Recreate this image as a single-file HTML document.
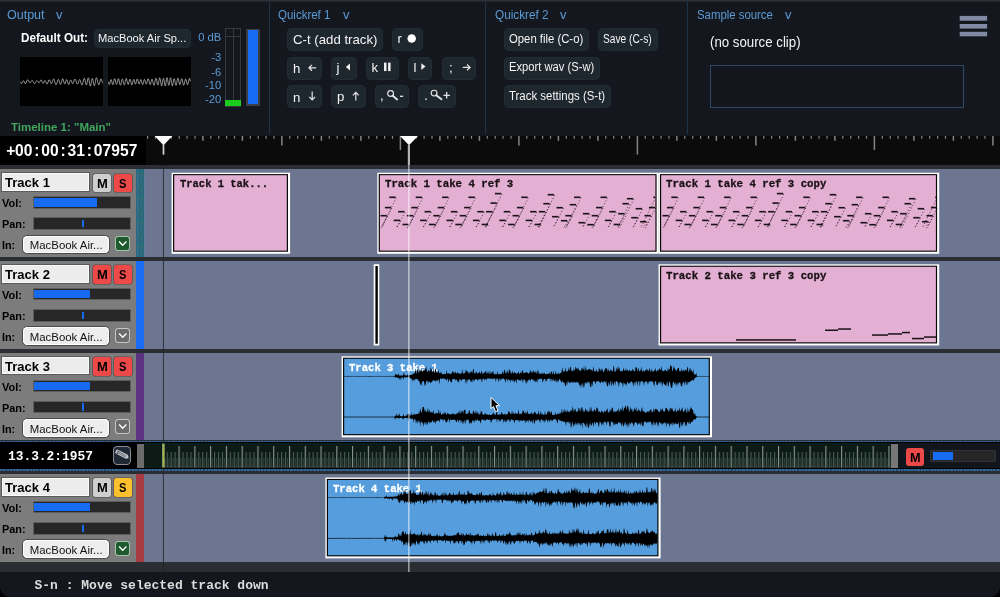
<!DOCTYPE html><html><head><meta charset="utf-8"><title>DAW</title><style>
*{box-sizing:border-box;margin:0;padding:0}
html,body{width:1000px;height:597px;overflow:hidden;background:#000}
body{position:relative;font-family:"Liberation Sans",sans-serif}
div,span,svg{position:absolute}
.t{white-space:pre;display:block}
.btn{background:#1e262e;border-radius:5px;box-shadow:inset 0 0 0 1px #232c35}
.vdiv{width:1px;background:#1d3349;top:2px;height:132px}
.blk{background:#000}
.hdr{background:#7c7c7c}
.name{background:#ececec;box-shadow:inset 0 0 0 1px #fafafa,0 0 0 1px #5a5a5a}
.ms{border-radius:2.5px;box-shadow:0 0 0 .6px rgba(50,30,30,.55)}
.sl{background:#272727;box-shadow:0 0 0 .8px #565656}
.fill{background:#166bf2}
.inb{background:#ededed;border-radius:4.5px;box-shadow:0 0 0 1px #4a4a4a, inset 0 0 0 1px #fff}
.cb{border-radius:2.5px}
.band{background:#2a2e32;left:0;width:1000px}
.lane{background:#6c7690}
.clip{box-shadow:0 0 0 1.1px #0a0a0a,0 0 0 2.6px #fff}
.pink{background:#e3afd3}
.sky{background:#559ddd}
.cl{-webkit-text-stroke:.3px currentColor}
</style></head><body><div id="app" style="left:0;top:0;width:1000px;height:597px;will-change:transform;background:#14181e;border-radius:0 0 11px 11px;overflow:hidden"><div style="left:0;top:0;width:1000px;height:2px;background:linear-gradient(#33363a,#1b1f24)"></div><div class="vdiv" style="left:269px"></div><div class="vdiv" style="left:485px"></div><div class="vdiv" style="left:687px"></div><span class="t" style="left:7px;top:8.52px;font:400 12.5px/1 'Liberation Sans',sans-serif;color:#5b9bd6;">Output</span><span class="t" style="left:56px;top:8.52px;font:400 12.5px/1 'Liberation Sans',sans-serif;color:#5b9bd6;transform:scaleX(1.04);transform-origin:left 50%;">v</span><span class="t" style="left:20.5px;top:31.87px;font:700 12.2px/1 'Liberation Sans',sans-serif;color:#fff;transform:scaleX(0.96);transform-origin:left 50%;">Default Out:</span><div class="btn" style="left:94px;top:29px;width:96.5px;height:18.5px;"></div><span class="t" style="left:98.3px;top:32.3px;font:400 11.7px/1 'Liberation Sans',sans-serif;color:#f2f2f2;transform:scaleX(0.95);transform-origin:left 50%;">MacBook Air Sp...</span><div class="blk" style="left:20.4px;top:56.6px;width:82.2px;height:49.6px;"></div><div class="blk" style="left:108.4px;top:56.6px;width:82.2px;height:49.6px;"></div><svg width="1000" height="597" viewBox="0 0 1000 597" style="left:0;top:0"><path d="M20.4 81.8L20.8 82.79L21.2 83.45L21.6 83.55L22 83.05L22.4 82.19L22.8 81.31L23.2 80.76L23.6 80.77L24 81.32L24.4 82.2L24.8 83.07L25.2 83.58L25.6 83.55L26 82.96L26.4 82L26.8 80.95L27.2 80.13L27.6 79.77L28 79.95L28.4 80.58L28.8 81.44L29.2 82.27L29.6 82.83L30 82.98L30.4 82.7L30.8 82.09L31.2 81.36L31.6 80.73L32 80.39L32.4 80.45L32.8 80.92L33.2 81.68L33.6 82.54L34 83.28L34.4 83.7L34.8 83.7L35.2 83.27L35.6 82.53L36 81.69L36.4 80.98L36.8 80.6L37.2 80.65L37.6 81.09L38 81.76L38.4 82.41L38.8 82.79L39.2 82.74L39.6 82.23L40 81.42L40.4 80.57L40.8 80.01L41.2 79.94L41.6 80.44L42 81.34L42.4 82.34L42.8 83.08L43.2 83.29L43.6 82.9L44 82.09L44.4 81.2L44.8 80.61L45.2 80.6L45.6 81.22L46 82.25L46.4 83.32L46.8 84.01L47.2 84.05L47.6 83.38L48 82.22L48.4 80.94L48.8 79.97L49.2 79.62L49.6 79.99L50 80.93L50.4 82.12L50.8 83.14L51.2 83.66L51.6 83.49L52 82.68L52.4 81.45L52.8 80.18L53.2 79.24L53.6 78.93L54 79.36L54.4 80.44L54.8 81.91L55.2 83.37L55.6 84.46L56 84.88L56.4 84.53L56.8 83.49L57.2 82.08L57.6 80.68L58 79.71L58.4 79.45L58.8 80L59.2 81.18L59.6 82.64L60 83.89L60.4 84.52L60.8 84.28L61.2 83.19L61.6 81.58L62 79.97L62.4 78.88L62.8 78.69L63.2 79.46L63.6 80.91L64 82.51L64.4 83.68L64.8 83.99L65.2 83.35L65.6 82.06L66 80.65L66.4 79.71L66.8 79.64L67.2 80.47L67.6 81.9L68 83.38L68.4 84.36L68.8 84.5L69.2 83.77L69.6 82.48L70 81.12L70.4 80.16L70.8 79.94L71.2 80.46L71.6 81.49L72 82.64L72.4 83.47L72.8 83.69L73.2 83.21L73.6 82.19L74 80.93L74.4 79.81L74.8 79.17L75.2 79.18L75.6 79.86L76 81.01L76.4 82.32L76.8 83.45L77.2 84.09L77.6 84.08L78 83.43L78.4 82.33L78.8 81.09L79.2 80.07L79.6 79.57L80 79.8L80.4 80.71L80.8 82.11L81.2 83.6L81.6 84.74L82 85.16L82.4 84.66L82.8 83.32L83.2 81.46L83.6 79.64L84 78.41L84.4 78.21L84.8 79.13L85.2 80.91L85.6 82.94L86 84.49L86.4 84.96L86.8 84.12L87.2 82.23L87.6 79.99L88 78.27L88.4 77.8L88.8 78.83L89.2 81.02L89.6 83.58L90 85.52L90.4 86.1L90.8 85.11L91.2 82.96L91.6 80.52L92 78.76L92.4 78.35L92.8 79.42L93.2 81.51L93.6 83.79L94 85.39L94.4 85.72L94.8 84.67L95.2 82.63L95.6 80.32L96 78.49L96.4 77.7L96.8 78.14L97.2 79.59L97.6 81.55L98 83.39L98.4 84.58L98.8 84.81L99.2 84.07L99.6 82.65L100 80.99L100.4 79.59L100.8 78.84L101.2 78.95L101.6 79.88L102 81.38L102.4 83.05" stroke="#d0d0d0" stroke-width=".7" fill="none"/><path d="M108.4 81.8L108.8 83.52L109.2 84.48L109.6 84.24L110 82.91L110.4 81.15L110.8 79.82L111.2 79.59L111.6 80.59L112 82.34L112.4 84.01L112.8 84.78L113.2 84.24L113.6 82.6L114 80.57L114.4 79.04L114.8 78.68L115.2 79.63L115.6 81.43L116 83.28L116.4 84.34L116.8 84.15L117.2 82.79L117.6 80.87L118 79.24L118.4 78.6L118.8 79.27L119.2 80.99L119.6 83.07L120 84.7L120.4 85.23L120.8 84.48L121.2 82.77L121.6 80.8L122 79.38L122.4 79.06L122.8 79.95L123.2 81.67L123.6 83.51L124 84.7L124.4 84.74L124.8 83.58L125.2 81.66L125.6 79.72L126 78.53L126.4 78.54L126.8 79.73L127.2 81.62L127.6 83.43L128 84.43L128.4 84.23L128.8 82.94L129.2 81.14L129.6 79.62L130 79.08L130.4 79.77L130.8 81.43L131.2 83.34L131.6 84.69L132 84.89L132.4 83.87L132.8 82.07L133.2 80.32L133.6 79.38L134 79.65L134.4 80.97L134.8 82.68L135.2 83.93L135.6 84.11L136 83.09L136.4 81.34L136.8 79.68L137.2 78.89L137.6 79.32L138 80.78L138.4 82.57L138.8 83.85L139.2 84.04L139.6 83.09L140 81.51L140.4 80.09L140.8 79.55L141.2 80.17L141.6 81.69L142 83.41L142.4 84.54L142.8 84.55L143.2 83.44L143.6 81.71L144 80.14L144.4 79.4L144.8 79.81L145.2 81.14L145.6 82.77L146 83.94L146.4 84.11L146.8 83.15L147.2 81.47L147.6 79.75L148 78.74L148.4 78.86L148.8 80.1L149.2 81.95L149.6 83.7L150 84.63L150.4 84.39L150.8 83.09L151.2 81.27L151.6 79.7L152 79.04L152.4 79.6L152.8 81.19L153.2 83.21L153.6 84.84L154 85.41L154.4 84.65L154.8 82.8L155.2 80.56L155.6 78.8L156 78.22L156.4 79.06L156.8 80.97L157.2 83.18L157.6 84.73L158 84.96L158.4 83.71L158.8 81.48L159.2 79.21L159.6 77.88L160 78.14L160.4 79.93L160.8 82.54L161.2 84.87L161.6 85.89L162 85.16L162.4 83L162.8 80.4L163.2 78.57L163.6 78.38L164 79.94L164.4 82.54L164.8 84.94L165.2 85.97L165.6 85.11L166 82.7L166.4 79.86L166.8 77.91L167.2 77.75L167.6 79.44L168 82.11L168.4 84.46L168.8 85.35L169.2 84.36L169.6 81.98L170 79.41L170.4 77.88L170.8 78.17L171.2 80.12L171.6 82.84L172 85.07L172.4 85.82L172.8 84.79L173.2 82.54L173.6 80.13L174 78.68L174.4 78.83L174.8 80.44L175.2 82.76L175.6 84.71L176 85.43L176.4 84.6L176.8 82.59L177.2 80.25L177.6 78.55L178 78.15L178.4 79.17L178.8 81.12L179.2 83.18L179.6 84.5L180 84.57L180.4 83.4L180.8 81.51L181.2 79.69L181.6 78.7L182 78.95L182.4 80.36L182.8 82.38L183.2 84.23L183.6 85.22L184 84.97L184.4 83.59L184.8 81.63L185.2 79.88L185.6 79.02L186 79.37L186.4 80.79L186.8 82.67L187.2 84.22L187.6 84.76L188 84.02L188.4 82.25L188.8 80.16L189.2 78.6L189.6 78.25L190 79.28L190.4 81.29" stroke="#d0d0d0" stroke-width=".7" fill="none"/></svg><span class="t" style="left:198.16px;top:31.72px;font:400 11.2px/1 'Liberation Sans',sans-serif;color:#5b9bd6;">0 dB</span><span class="t" style="left:211.24px;top:51.92px;font:400 11.2px/1 'Liberation Sans',sans-serif;color:#5b9bd6;">-3</span><span class="t" style="left:211.24px;top:66.52px;font:400 11.2px/1 'Liberation Sans',sans-serif;color:#5b9bd6;">-6</span><span class="t" style="left:205.01px;top:79.52px;font:400 11.2px/1 'Liberation Sans',sans-serif;color:#5b9bd6;">-10</span><span class="t" style="left:205.01px;top:94.12px;font:400 11.2px/1 'Liberation Sans',sans-serif;color:#5b9bd6;">-20</span><div class="" style="left:225px;top:28px;width:16px;height:78.6px;background:#14181e;box-shadow:inset 0 0 0 1px #36393e"></div><div class="" style="left:232.5px;top:28px;width:1px;height:78.6px;background:#36393e"></div><div class="" style="left:225px;top:36.4px;width:16px;height:1px;background:#36393e"></div><div class="" style="left:225.4px;top:99.8px;width:15.2px;height:6.5px;background:#1ccc1c"></div><div class="" style="left:246.4px;top:28.8px;width:13.5px;height:77.6px;background:#3b3e43"></div><div class="" style="left:248.1px;top:30.3px;width:10.3px;height:74px;background:#176bf5"></div><span class="t" style="left:278.3px;top:8.52px;font:400 12.5px/1 'Liberation Sans',sans-serif;color:#5b9bd6;transform:scaleX(0.92);transform-origin:left 50%;">Quickref 1</span><span class="t" style="left:343px;top:8.52px;font:400 12.5px/1 'Liberation Sans',sans-serif;color:#5b9bd6;transform:scaleX(1.04);transform-origin:left 50%;">v</span><div class="btn" style="left:287px;top:28.3px;width:95.6px;height:23.1px;"></div><span class="t" style="left:293.1px;top:32.73px;font:400 13.2px/1 'Liberation Sans',sans-serif;color:#f4f4f4;">C-t (add track)</span><div class="btn" style="left:391.7px;top:28.3px;width:31px;height:23.1px;"></div><span class="t" style="left:397.5px;top:32.23px;font:400 13.2px/1 'Liberation Sans',sans-serif;color:#f4f4f4;">r</span><div class="btn" style="left:287px;top:57px;width:35px;height:22.6px;"></div><span class="t" style="left:293px;top:62.43px;font:400 13.2px/1 'Liberation Sans',sans-serif;color:#f4f4f4;">h</span><div class="btn" style="left:331px;top:57px;width:25.7px;height:22.6px;"></div><span class="t" style="left:336.6px;top:61.03px;font:400 13.2px/1 'Liberation Sans',sans-serif;color:#f4f4f4;">j</span><div class="btn" style="left:366px;top:57px;width:32.5px;height:22.6px;"></div><span class="t" style="left:371.5px;top:60.83px;font:400 13.2px/1 'Liberation Sans',sans-serif;color:#f4f4f4;">k</span><div class="btn" style="left:407.7px;top:57px;width:24.7px;height:22.6px;"></div><span class="t" style="left:413.5px;top:60.83px;font:400 13.2px/1 'Liberation Sans',sans-serif;color:#f4f4f4;">l</span><div class="btn" style="left:441.6px;top:57px;width:34.4px;height:22.6px;"></div><span class="t" style="left:449px;top:61.13px;font:400 13.2px/1 'Liberation Sans',sans-serif;color:#f4f4f4;">;</span><div class="btn" style="left:287px;top:85.4px;width:35px;height:22.6px;"></div><span class="t" style="left:293px;top:90.63px;font:400 13.2px/1 'Liberation Sans',sans-serif;color:#f4f4f4;">n</span><div class="btn" style="left:331px;top:85.4px;width:34.5px;height:22.6px;"></div><span class="t" style="left:337px;top:90.23px;font:400 13.2px/1 'Liberation Sans',sans-serif;color:#f4f4f4;">p</span><div class="btn" style="left:374.7px;top:85.4px;width:34.3px;height:22.6px;"></div><span class="t" style="left:380px;top:89.43px;font:400 13.2px/1 'Liberation Sans',sans-serif;color:#f4f4f4;">,</span><div class="btn" style="left:418.3px;top:85.4px;width:37.7px;height:22.6px;"></div><span class="t" style="left:424.2px;top:89.43px;font:400 13.2px/1 'Liberation Sans',sans-serif;color:#f4f4f4;">.</span><svg width="1000" height="597" viewBox="0 0 1000 597" style="left:0;top:0" fill="none" stroke="#e4e4e4" stroke-width="1.2"><path d="M316.2 67.8H308.9M312 64.9L308.9 67.8L312 70.7"/><path d="M462.8 67.4H470.1M467 64.5L470.1 67.4L467 70.3"/><path d="M312.2 91.6V99.9M309.3 96.8L312.2 99.9L315.1 96.8"/><path d="M355.8 100.5V92.3M352.9 95.4L355.8 92.3L358.7 95.4"/><path d="M350 63.4V70.6L345.8 67Z" fill="#f0f0f0" stroke="none"/><path d="M421.3 63.2V70L425.5 66.6Z" fill="#f0f0f0" stroke="none"/><rect x="384" y="62.6" width="2.5" height="8.5" fill="#f0f0f0" stroke="none"/><rect x="388.1" y="62.6" width="2.5" height="8.5" fill="#f0f0f0" stroke="none"/><circle cx="390.6" cy="93.5" r="2.9" stroke-width="1.15"/><path d="M392.7 95.7L397.2 99.5" stroke-width="1.9" stroke-linecap="round"/><circle cx="434.1" cy="93.1" r="2.9" stroke-width="1.15"/><path d="M436.2 95.3L441.5 99.3" stroke-width="1.9" stroke-linecap="round"/><path d="M400 96.3H403.2" stroke-width="1.3"/><circle cx="411.7" cy="38.5" r="4.25" fill="#fff" stroke="none"/><path d="M443.4 95.3H449.9M446.65 92V98.6" stroke-width="1.35"/></svg><span class="t" style="left:494.5px;top:8.52px;font:400 12.5px/1 'Liberation Sans',sans-serif;color:#5b9bd6;transform:scaleX(0.94);transform-origin:left 50%;">Quickref 2</span><span class="t" style="left:559.6px;top:8.52px;font:400 12.5px/1 'Liberation Sans',sans-serif;color:#5b9bd6;transform:scaleX(1.04);transform-origin:left 50%;">v</span><div class="btn" style="left:503.8px;top:28.3px;width:84.9px;height:23.1px;"></div><span class="t" style="left:509px;top:32.89px;font:400 12.3px/1 'Liberation Sans',sans-serif;color:#f4f4f4;transform:scaleX(0.92);transform-origin:left 50%;">Open file (C-o)</span><div class="btn" style="left:598px;top:28.3px;width:59.8px;height:23.1px;"></div><span class="t" style="left:603.4px;top:32.89px;font:400 12.3px/1 'Liberation Sans',sans-serif;color:#f4f4f4;transform:scaleX(0.83);transform-origin:left 50%;">Save (C-s)</span><div class="btn" style="left:503.8px;top:57px;width:95.9px;height:22.6px;"></div><span class="t" style="left:509px;top:61.19px;font:400 12.3px/1 'Liberation Sans',sans-serif;color:#f4f4f4;transform:scaleX(0.91);transform-origin:left 50%;">Export wav (S-w)</span><div class="btn" style="left:503.8px;top:85.4px;width:106.9px;height:22.6px;"></div><span class="t" style="left:509px;top:89.69px;font:400 12.3px/1 'Liberation Sans',sans-serif;color:#f4f4f4;transform:scaleX(0.93);transform-origin:left 50%;">Track settings (S-t)</span><span class="t" style="left:696.6px;top:8.52px;font:400 12.5px/1 'Liberation Sans',sans-serif;color:#5b9bd6;transform:scaleX(0.91);transform-origin:left 50%;">Sample source</span><span class="t" style="left:785px;top:8.52px;font:400 12.5px/1 'Liberation Sans',sans-serif;color:#5b9bd6;transform:scaleX(1.04);transform-origin:left 50%;">v</span><span class="t" style="left:710px;top:35.62px;font:400 13.8px/1 'Liberation Sans',sans-serif;color:#f4f4f4;transform:scaleX(0.96);transform-origin:left 50%;">(no source clip)</span><div class="" style="left:710px;top:65px;width:254px;height:43px;border:1px solid #2a4a66;background:#13171d"></div><svg style="left:955px;top:12px" width="36" height="28" viewBox="955 12 36 28"><g fill="#808aa5"><rect x="959.7" y="15.9" width="27.4" height="4.8"/><rect x="959.7" y="24" width="27.4" height="4.6"/><rect x="959.7" y="31.8" width="27.4" height="4.5"/></g></svg><span class="t" style="left:11.3px;top:121.18px;font:700 11.6px/1 'Liberation Sans',sans-serif;color:#3fa65c;transform:scaleX(0.99);transform-origin:left 50%;">Timeline 1: &quot;Main&quot;</span><div class="" style="left:0px;top:136px;width:1000px;height:29px;background:#0b0b0b"></div><div class="blk" style="left:0px;top:136px;width:146px;height:29px;"></div><div style="left:6.25px;top:142.59px;height:16px;width:132px;font:700 15.6px/1 'Liberation Sans',sans-serif;color:#fff;white-space:nowrap"><span style="position:absolute;left:0px;width:8.75px;text-align:center">+</span><span style="position:absolute;left:8.75px;width:8.75px;text-align:center">0</span><span style="position:absolute;left:17.5px;width:8.75px;text-align:center">0</span><span style="position:absolute;left:26.25px;width:8.75px;text-align:center">:</span><span style="position:absolute;left:35px;width:8.75px;text-align:center">0</span><span style="position:absolute;left:43.75px;width:8.75px;text-align:center">0</span><span style="position:absolute;left:52.5px;width:8.75px;text-align:center">:</span><span style="position:absolute;left:61.25px;width:8.75px;text-align:center">3</span><span style="position:absolute;left:70px;width:8.75px;text-align:center">1</span><span style="position:absolute;left:78.75px;width:8.75px;text-align:center">:</span><span style="position:absolute;left:87.5px;width:8.75px;text-align:center">0</span><span style="position:absolute;left:96.25px;width:8.75px;text-align:center">7</span><span style="position:absolute;left:105px;width:8.75px;text-align:center">9</span><span style="position:absolute;left:113.75px;width:8.75px;text-align:center">5</span><span style="position:absolute;left:122.5px;width:8.75px;text-align:center">7</span></div><div class="band" style="left:0px;top:165px;width:1000px;height:407px;"></div><div class="hdr" style="left:0px;top:169.3px;width:136.5px;height:87.5px;"></div><div class="" style="left:136.3px;top:169.3px;width:7.7px;height:87.5px;background:#2a6880"></div><div class="lane" style="left:144px;top:169.3px;width:856px;height:87.5px;"></div><div class="name" style="left:1.8px;top:173.1px;width:86.8px;height:17.9px;"></div><span class="t" style="left:5px;top:177.38px;font:700 12.9px/1 'Liberation Sans',sans-serif;color:#000;transform:scaleX(1.01);transform-origin:left 50%;">Track 1</span><div class="ms" style="left:93.3px;top:173.7px;width:17.6px;height:18.6px;background:#cfcfcf"></div><span class="t" style="left:96.8px;top:177.53px;font:700 12.6px/1 'Liberation Sans',sans-serif;color:#000;transform:scaleX(1.03);transform-origin:left 50%;">M</span><div class="ms" style="left:113.6px;top:173.7px;width:18.2px;height:18.6px;background:#ee4949"></div><span class="t" style="left:119.2px;top:177.53px;font:700 12.6px/1 'Liberation Sans',sans-serif;color:#000;transform:scaleX(0.88);transform-origin:left 50%;">S</span><span class="t" style="left:2.3px;top:198.01px;font:700 10.5px/1 'Liberation Sans',sans-serif;color:#000;transform:scaleX(1.05);transform-origin:left 50%;">Vol:</span><div class="sl" style="left:33.6px;top:197.2px;width:96.2px;height:10.6px;"></div><div class="fill" style="left:34.4px;top:198.2px;width:62.3px;height:8.6px;"></div><span class="t" style="left:2.3px;top:219.31px;font:700 10.5px/1 'Liberation Sans',sans-serif;color:#000;transform:scaleX(1.04);transform-origin:left 50%;">Pan:</span><div class="sl" style="left:33.6px;top:218.3px;width:96.2px;height:10.6px;"></div><div class="fill" style="left:82px;top:219.9px;width:1.8px;height:7.4px;"></div><span class="t" style="left:2px;top:240.01px;font:700 10.5px/1 'Liberation Sans',sans-serif;color:#000;transform:scaleX(1.03);transform-origin:left 50%;">In:</span><div class="inb" style="left:22.6px;top:235.5px;width:86px;height:17.8px;"></div><span class="t" style="left:29.8px;top:240.15px;font:400 11.4px/1 'Liberation Sans',sans-serif;color:#111;">MacBook Air...</span><div class="cb" style="left:115.5px;top:236.8px;width:13.6px;height:13.1px;background:#1f5a2f;box-shadow:0 0 0 1px #a3c4aa"></div><svg style="left:114.8px;top:236.9px" width="15" height="14" viewBox="0 0 15 14"><path d="M4.1 4.5 7.7 8.3 11.4 4.5" fill="none" stroke="#fff" stroke-width="1.35"/></svg><svg style="left:136.6px;top:169.3px" width="8" height="87"><defs><pattern id="dots" width="8" height="12" patternUnits="userSpaceOnUse"><rect x="1" y="3" width="1" height="1" fill="#2c9a3c"/><rect x="4.5" y="2" width="1" height="1" fill="#2c9a3c"/><rect x="3.5" y="8" width="1" height="1" fill="#2c9a3c"/><rect x="5" y="5" width=".8" height=".8" fill="#a8863c"/><rect x="2.5" y="5.5" width=".8" height=".8" fill="#a8863c"/><rect x="4" y="10.5" width=".8" height=".8" fill="#a8863c"/><rect x="0" y="0" width=".7" height="12" fill="#4f8fc0" opacity=".5"/><rect x="7.3" y="0" width=".7" height="12" fill="#4f8fc0" opacity=".5"/></pattern></defs><rect width="8" height="87" fill="url(#dots)" opacity=".75"/></svg><div class="hdr" style="left:0px;top:261px;width:136.5px;height:87.5px;"></div><div class="" style="left:136.3px;top:261px;width:7.7px;height:87.5px;background:#1a6cf2"></div><div class="lane" style="left:144px;top:261px;width:856px;height:87.5px;"></div><div class="name" style="left:1.8px;top:264.8px;width:86.8px;height:17.9px;"></div><span class="t" style="left:5px;top:269.08px;font:700 12.9px/1 'Liberation Sans',sans-serif;color:#000;transform:scaleX(1.01);transform-origin:left 50%;">Track 2</span><div class="ms" style="left:93.3px;top:265.4px;width:17.6px;height:18.6px;background:#ee4949"></div><span class="t" style="left:96.8px;top:269.23px;font:700 12.6px/1 'Liberation Sans',sans-serif;color:#000;transform:scaleX(1.03);transform-origin:left 50%;">M</span><div class="ms" style="left:113.6px;top:265.4px;width:18.2px;height:18.6px;background:#ee4949"></div><span class="t" style="left:119.2px;top:269.23px;font:700 12.6px/1 'Liberation Sans',sans-serif;color:#000;transform:scaleX(0.88);transform-origin:left 50%;">S</span><span class="t" style="left:2.3px;top:289.71px;font:700 10.5px/1 'Liberation Sans',sans-serif;color:#000;transform:scaleX(1.05);transform-origin:left 50%;">Vol:</span><div class="sl" style="left:33.6px;top:288.9px;width:96.2px;height:10.6px;"></div><div class="fill" style="left:34.4px;top:289.9px;width:55.6px;height:8.6px;"></div><span class="t" style="left:2.3px;top:311.01px;font:700 10.5px/1 'Liberation Sans',sans-serif;color:#000;transform:scaleX(1.04);transform-origin:left 50%;">Pan:</span><div class="sl" style="left:33.6px;top:310px;width:96.2px;height:10.6px;"></div><div class="fill" style="left:82px;top:311.6px;width:1.8px;height:7.4px;"></div><span class="t" style="left:2px;top:331.71px;font:700 10.5px/1 'Liberation Sans',sans-serif;color:#000;transform:scaleX(1.03);transform-origin:left 50%;">In:</span><div class="inb" style="left:22.6px;top:327.2px;width:86px;height:17.8px;"></div><span class="t" style="left:29.8px;top:331.85px;font:400 11.4px/1 'Liberation Sans',sans-serif;color:#111;">MacBook Air...</span><div class="cb" style="left:115.5px;top:328.5px;width:13.6px;height:13.1px;background:#6c6c6c;box-shadow:0 0 0 1px #c6c6c6"></div><svg style="left:114.8px;top:328.6px" width="15" height="14" viewBox="0 0 15 14"><path d="M4.1 4.5 7.7 8.3 11.4 4.5" fill="none" stroke="#fff" stroke-width="1.35"/></svg><div class="hdr" style="left:0px;top:352.8px;width:136.5px;height:87.5px;"></div><div class="" style="left:136.3px;top:352.8px;width:7.7px;height:87.5px;background:#5c3380"></div><div class="lane" style="left:144px;top:352.8px;width:856px;height:87.5px;"></div><div class="name" style="left:1.8px;top:356.6px;width:86.8px;height:17.9px;"></div><span class="t" style="left:5px;top:360.88px;font:700 12.9px/1 'Liberation Sans',sans-serif;color:#000;transform:scaleX(1.01);transform-origin:left 50%;">Track 3</span><div class="ms" style="left:93.3px;top:357.2px;width:17.6px;height:18.6px;background:#ee4949"></div><span class="t" style="left:96.8px;top:361.03px;font:700 12.6px/1 'Liberation Sans',sans-serif;color:#000;transform:scaleX(1.03);transform-origin:left 50%;">M</span><div class="ms" style="left:113.6px;top:357.2px;width:18.2px;height:18.6px;background:#ee4949"></div><span class="t" style="left:119.2px;top:361.03px;font:700 12.6px/1 'Liberation Sans',sans-serif;color:#000;transform:scaleX(0.88);transform-origin:left 50%;">S</span><span class="t" style="left:2.3px;top:381.51px;font:700 10.5px/1 'Liberation Sans',sans-serif;color:#000;transform:scaleX(1.05);transform-origin:left 50%;">Vol:</span><div class="sl" style="left:33.6px;top:380.7px;width:96.2px;height:10.6px;"></div><div class="fill" style="left:34.4px;top:381.7px;width:55.6px;height:8.6px;"></div><span class="t" style="left:2.3px;top:402.81px;font:700 10.5px/1 'Liberation Sans',sans-serif;color:#000;transform:scaleX(1.04);transform-origin:left 50%;">Pan:</span><div class="sl" style="left:33.6px;top:401.8px;width:96.2px;height:10.6px;"></div><div class="fill" style="left:82px;top:403.4px;width:1.8px;height:7.4px;"></div><span class="t" style="left:2px;top:423.51px;font:700 10.5px/1 'Liberation Sans',sans-serif;color:#000;transform:scaleX(1.03);transform-origin:left 50%;">In:</span><div class="inb" style="left:22.6px;top:419px;width:86px;height:17.8px;"></div><span class="t" style="left:29.8px;top:423.65px;font:400 11.4px/1 'Liberation Sans',sans-serif;color:#111;">MacBook Air...</span><div class="cb" style="left:115.5px;top:420.3px;width:13.6px;height:13.1px;background:#6c6c6c;box-shadow:0 0 0 1px #c6c6c6"></div><svg style="left:114.8px;top:420.4px" width="15" height="14" viewBox="0 0 15 14"><path d="M4.1 4.5 7.7 8.3 11.4 4.5" fill="none" stroke="#fff" stroke-width="1.35"/></svg><div class="hdr" style="left:0px;top:474px;width:136.5px;height:87.5px;"></div><div class="" style="left:136.3px;top:474px;width:7.7px;height:87.5px;background:#a83a44"></div><div class="lane" style="left:144px;top:474px;width:856px;height:87.5px;"></div><div class="name" style="left:1.8px;top:477.8px;width:86.8px;height:17.9px;"></div><span class="t" style="left:5px;top:482.08px;font:700 12.9px/1 'Liberation Sans',sans-serif;color:#000;transform:scaleX(1.01);transform-origin:left 50%;">Track 4</span><div class="ms" style="left:93.3px;top:478.4px;width:17.6px;height:18.6px;background:#cfcfcf"></div><span class="t" style="left:96.8px;top:482.23px;font:700 12.6px/1 'Liberation Sans',sans-serif;color:#000;transform:scaleX(1.03);transform-origin:left 50%;">M</span><div class="ms" style="left:113.6px;top:478.4px;width:18.2px;height:18.6px;background:#fcc02e"></div><span class="t" style="left:119.2px;top:482.23px;font:700 12.6px/1 'Liberation Sans',sans-serif;color:#000;transform:scaleX(0.88);transform-origin:left 50%;">S</span><span class="t" style="left:2.3px;top:502.71px;font:700 10.5px/1 'Liberation Sans',sans-serif;color:#000;transform:scaleX(1.05);transform-origin:left 50%;">Vol:</span><div class="sl" style="left:33.6px;top:501.9px;width:96.2px;height:10.6px;"></div><div class="fill" style="left:34.4px;top:502.9px;width:55.6px;height:8.6px;"></div><span class="t" style="left:2.3px;top:524.01px;font:700 10.5px/1 'Liberation Sans',sans-serif;color:#000;transform:scaleX(1.04);transform-origin:left 50%;">Pan:</span><div class="sl" style="left:33.6px;top:523px;width:96.2px;height:10.6px;"></div><div class="fill" style="left:82px;top:524.6px;width:1.8px;height:7.4px;"></div><span class="t" style="left:2px;top:544.71px;font:700 10.5px/1 'Liberation Sans',sans-serif;color:#000;transform:scaleX(1.03);transform-origin:left 50%;">In:</span><div class="inb" style="left:22.6px;top:540.2px;width:86px;height:17.8px;"></div><span class="t" style="left:29.8px;top:544.85px;font:400 11.4px/1 'Liberation Sans',sans-serif;color:#111;">MacBook Air...</span><div class="cb" style="left:115.5px;top:541.5px;width:13.6px;height:13.1px;background:#1f5a2f;box-shadow:0 0 0 1px #a3c4aa"></div><svg style="left:114.8px;top:541.6px" width="15" height="14" viewBox="0 0 15 14"><path d="M4.1 4.5 7.7 8.3 11.4 4.5" fill="none" stroke="#fff" stroke-width="1.35"/></svg><div class="" style="left:0px;top:440.5px;width:1000px;height:30.2px;background:#000"></div><div class="" style="left:0px;top:440.6px;width:1000px;height:1.4px;background:repeating-linear-gradient(90deg,#34679a 0 2.2px,#25496e 2.2px 3.3px)"></div><div class="" style="left:0px;top:469.2px;width:1000px;height:1.4px;background:repeating-linear-gradient(90deg,#34679a 0 2.2px,#25496e 2.2px 3.3px)"></div><span class="t" style="left:8.2px;top:449.93px;font:700 13.4px/1 'Liberation Mono',monospace;color:#fff;transform:scaleX(0.96);transform-origin:left 50%;">13.3.2:1957</span><div class="" style="left:112.7px;top:446.1px;width:18.8px;height:18.8px;background:#1f2833;border-radius:4.5px;box-shadow:inset 0 0 0 1px #868c94"></div><svg style="left:112.7px;top:446.1px" width="19" height="19" viewBox="0 0 19 19"><g transform="translate(2.8 5) rotate(27.5) scale(1.12)"><path d="M1.2 -2H10.6L14.4 0.3L10.6 2H1.2Q0 2 0 .8V-.8Q0 -2 1.2 -2Z" fill="#c9cdd2"/><path d="M1 -0.7H10.4M1 .7H10.4M2.4 -2V2" stroke="#454b54" stroke-width=".6" fill="none"/><path d="M12.4 -0.9L14.4 .3L12.4 1.2Z" fill="#20242a"/></g></svg><div class="" style="left:137px;top:443.5px;width:7px;height:24px;background:#6b6b6b"></div><div class="" style="left:144px;top:443px;width:746.8px;height:24.8px;background:#0c1b16"></div><div class="" style="left:890.8px;top:443.5px;width:7.2px;height:24px;background:#777"></div><div class="" style="left:898px;top:443px;width:102px;height:25px;background:#12161c"></div><div class="" style="left:905.8px;top:448.3px;width:18.2px;height:17.8px;background:#ee4949;border-radius:3px"></div><span class="t" style="left:909.6px;top:451.63px;font:700 12.6px/1 'Liberation Sans',sans-serif;color:#000;transform:scaleX(1.01);transform-origin:left 50%;">M</span><div class="" style="left:931.4px;top:450.6px;width:63.6px;height:10.8px;background:#262626;box-shadow:0 0 0 .7px #3c3c3c"></div><div class="fill" style="left:932.8px;top:452px;width:20.7px;height:7.6px;"></div><svg width="1000" height="597" viewBox="0 0 1000 597" style="left:0;top:0"><defs><pattern id="clk" x="162.75" y="443" width="15.775" height="25" patternUnits="userSpaceOnUse"><rect x="0.2" y="3" width=".9" height="21.6" fill="#a6b6ae"/><rect x="4.14" y="9.2" width=".9" height="15.4" fill="#5b6f66"/><rect x="8.09" y="9.2" width=".9" height="15.4" fill="#5b6f66"/><rect x="12.03" y="9.2" width=".9" height="15.4" fill="#5b6f66"/><rect x="2.22" y="15" width=".8" height="9.6" fill="#384c43"/><rect x="6.17" y="15" width=".8" height="9.6" fill="#384c43"/><rect x="10.11" y="15" width=".8" height="9.6" fill="#384c43"/><rect x="14.05" y="15" width=".8" height="9.6" fill="#384c43"/><rect x="0" y="22.4" width="15.775" height="2.2" fill="#6a4a4a" opacity=".22"/></pattern></defs><g fill="#858585"><rect x="147" y="136" width="1.2" height="2.8"/><rect x="154.9" y="136" width="1.2" height="2.8"/><rect x="162.65" y="136" width="1.5" height="18.5"/><rect x="170.7" y="136" width="1.2" height="2.8"/><rect x="178.6" y="136" width="1.2" height="2.8"/><rect x="186.5" y="136" width="1.2" height="2.8"/><rect x="194.4" y="136" width="1.2" height="2.8"/><rect x="202.15" y="136" width="1.5" height="4.8"/><rect x="210.2" y="136" width="1.2" height="2.8"/><rect x="218.1" y="136" width="1.2" height="2.8"/><rect x="226" y="136" width="1.2" height="2.8"/><rect x="233.9" y="136" width="1.2" height="2.8"/><rect x="241.65" y="136" width="1.5" height="4.8"/><rect x="249.7" y="136" width="1.2" height="2.8"/><rect x="257.6" y="136" width="1.2" height="2.8"/><rect x="265.5" y="136" width="1.2" height="2.8"/><rect x="273.4" y="136" width="1.2" height="2.8"/><rect x="281.15" y="136" width="1.5" height="9.6"/><rect x="289.2" y="136" width="1.2" height="2.8"/><rect x="297.1" y="136" width="1.2" height="2.8"/><rect x="305" y="136" width="1.2" height="2.8"/><rect x="312.9" y="136" width="1.2" height="2.8"/><rect x="320.65" y="136" width="1.5" height="4.8"/><rect x="328.7" y="136" width="1.2" height="2.8"/><rect x="336.6" y="136" width="1.2" height="2.8"/><rect x="344.5" y="136" width="1.2" height="2.8"/><rect x="352.4" y="136" width="1.2" height="2.8"/><rect x="360.15" y="136" width="1.5" height="4.8"/><rect x="368.2" y="136" width="1.2" height="2.8"/><rect x="376.1" y="136" width="1.2" height="2.8"/><rect x="384" y="136" width="1.2" height="2.8"/><rect x="391.9" y="136" width="1.2" height="2.8"/><rect x="399.65" y="136" width="1.5" height="14"/><rect x="407.7" y="136" width="1.2" height="2.8"/><rect x="415.6" y="136" width="1.2" height="2.8"/><rect x="423.5" y="136" width="1.2" height="2.8"/><rect x="431.4" y="136" width="1.2" height="2.8"/><rect x="439.15" y="136" width="1.5" height="4.8"/><rect x="447.2" y="136" width="1.2" height="2.8"/><rect x="455.1" y="136" width="1.2" height="2.8"/><rect x="463" y="136" width="1.2" height="2.8"/><rect x="470.9" y="136" width="1.2" height="2.8"/><rect x="478.65" y="136" width="1.5" height="4.8"/><rect x="486.7" y="136" width="1.2" height="2.8"/><rect x="494.6" y="136" width="1.2" height="2.8"/><rect x="502.5" y="136" width="1.2" height="2.8"/><rect x="510.4" y="136" width="1.2" height="2.8"/><rect x="518.15" y="136" width="1.5" height="9.6"/><rect x="526.2" y="136" width="1.2" height="2.8"/><rect x="534.1" y="136" width="1.2" height="2.8"/><rect x="542" y="136" width="1.2" height="2.8"/><rect x="549.9" y="136" width="1.2" height="2.8"/><rect x="557.65" y="136" width="1.5" height="4.8"/><rect x="565.7" y="136" width="1.2" height="2.8"/><rect x="573.6" y="136" width="1.2" height="2.8"/><rect x="581.5" y="136" width="1.2" height="2.8"/><rect x="589.4" y="136" width="1.2" height="2.8"/><rect x="597.15" y="136" width="1.5" height="4.8"/><rect x="605.2" y="136" width="1.2" height="2.8"/><rect x="613.1" y="136" width="1.2" height="2.8"/><rect x="621" y="136" width="1.2" height="2.8"/><rect x="628.9" y="136" width="1.2" height="2.8"/><rect x="636.65" y="136" width="1.5" height="18.5"/><rect x="644.7" y="136" width="1.2" height="2.8"/><rect x="652.6" y="136" width="1.2" height="2.8"/><rect x="660.5" y="136" width="1.2" height="2.8"/><rect x="668.4" y="136" width="1.2" height="2.8"/><rect x="676.15" y="136" width="1.5" height="4.8"/><rect x="684.2" y="136" width="1.2" height="2.8"/><rect x="692.1" y="136" width="1.2" height="2.8"/><rect x="700" y="136" width="1.2" height="2.8"/><rect x="707.9" y="136" width="1.2" height="2.8"/><rect x="715.65" y="136" width="1.5" height="4.8"/><rect x="723.7" y="136" width="1.2" height="2.8"/><rect x="731.6" y="136" width="1.2" height="2.8"/><rect x="739.5" y="136" width="1.2" height="2.8"/><rect x="747.4" y="136" width="1.2" height="2.8"/><rect x="755.15" y="136" width="1.5" height="9.6"/><rect x="763.2" y="136" width="1.2" height="2.8"/><rect x="771.1" y="136" width="1.2" height="2.8"/><rect x="779" y="136" width="1.2" height="2.8"/><rect x="786.9" y="136" width="1.2" height="2.8"/><rect x="794.65" y="136" width="1.5" height="4.8"/><rect x="802.7" y="136" width="1.2" height="2.8"/><rect x="810.6" y="136" width="1.2" height="2.8"/><rect x="818.5" y="136" width="1.2" height="2.8"/><rect x="826.4" y="136" width="1.2" height="2.8"/><rect x="834.15" y="136" width="1.5" height="4.8"/><rect x="842.2" y="136" width="1.2" height="2.8"/><rect x="850.1" y="136" width="1.2" height="2.8"/><rect x="858" y="136" width="1.2" height="2.8"/><rect x="865.9" y="136" width="1.2" height="2.8"/><rect x="873.65" y="136" width="1.5" height="14"/><rect x="881.7" y="136" width="1.2" height="2.8"/><rect x="889.6" y="136" width="1.2" height="2.8"/><rect x="897.5" y="136" width="1.2" height="2.8"/><rect x="905.4" y="136" width="1.2" height="2.8"/><rect x="913.15" y="136" width="1.5" height="4.8"/><rect x="921.2" y="136" width="1.2" height="2.8"/><rect x="929.1" y="136" width="1.2" height="2.8"/><rect x="937" y="136" width="1.2" height="2.8"/><rect x="944.9" y="136" width="1.2" height="2.8"/><rect x="952.65" y="136" width="1.5" height="4.8"/><rect x="960.7" y="136" width="1.2" height="2.8"/><rect x="968.6" y="136" width="1.2" height="2.8"/><rect x="976.5" y="136" width="1.2" height="2.8"/><rect x="984.4" y="136" width="1.2" height="2.8"/><rect x="992.15" y="136" width="1.5" height="9.6"/></g><rect x="162.75" y="443" width="728" height="25" fill="url(#clk)"/><rect x="162.9" y="165" width="1" height="407" fill="#23262c" opacity=".85"/><rect x="162" y="443.6" width="2.7" height="23.8" fill="#6f9a6c"/><path d="M163.6 444.6V467" stroke="#f6c61c" stroke-width="1.4" stroke-dasharray=".9 .9"/></svg><svg width="1000" height="597" viewBox="0 0 1000 597" style="left:0;top:0"><rect x="171.6" y="172.7" width="118.5" height="81.1" fill="#fff"/><rect x="173" y="174.1" width="115" height="77.65" fill="#080808"/><rect x="174.2" y="175.2" width="112.6" height="75.4" fill="#e3afd3"/><rect x="377.3" y="172.7" width="281.4" height="81.1" fill="#fff"/><rect x="378.7" y="174.1" width="277.9" height="77.65" fill="#080808"/><rect x="379.9" y="175.2" width="275.5" height="75.4" fill="#e3afd3"/><rect x="658.55" y="172.7" width="280.65" height="81.1" fill="#fff"/><rect x="659.95" y="174.1" width="277.15" height="77.65" fill="#080808"/><rect x="661.15" y="175.2" width="274.75" height="75.4" fill="#e3afd3"/><rect x="658.55" y="264.3" width="280.65" height="81.2" fill="#fff"/><rect x="659.95" y="265.7" width="277.15" height="77.75" fill="#080808"/><rect x="661.15" y="266.8" width="274.75" height="75.5" fill="#e3afd3"/><rect x="373.7" y="264.2" width="5.6" height="81.3" fill="#fff"/><rect x="375.4" y="266" width="2.4" height="77.7" fill="#000"/><rect x="341.6" y="356.3" width="370.4" height="81" fill="#fff"/><rect x="343" y="357.7" width="366.9" height="77.55" fill="#080808"/><rect x="344.2" y="358.8" width="364.5" height="75.3" fill="#559ddd"/><rect x="325.4" y="477.5" width="335.2" height="80.9" fill="#fff"/><rect x="326.8" y="478.9" width="331.7" height="77.45" fill="#080808"/><rect x="328" y="480" width="329.3" height="75.2" fill="#559ddd"/></svg><span class="t cl" style="left:179.7px;top:178.72px;font:700 10.8px/1 'Liberation Mono',monospace;color:#1b1216;transform:scaleX(0.97);transform-origin:left 50%;">Track 1 tak...</span><span class="t cl" style="left:385.2px;top:178.72px;font:700 10.8px/1 'Liberation Mono',monospace;color:#1b1216;transform:scaleX(0.99);transform-origin:left 50%;">Track 1 take 4 ref 3</span><span class="t cl" style="left:665.7px;top:178.72px;font:700 10.8px/1 'Liberation Mono',monospace;color:#1b1216;transform:scaleX(0.99);transform-origin:left 50%;">Track 1 take 4 ref 3 copy</span><span class="t cl" style="left:665.7px;top:271.02px;font:700 10.8px/1 'Liberation Mono',monospace;color:#1b1216;transform:scaleX(0.99);transform-origin:left 50%;">Track 2 take 3 ref 3 copy</span><span class="t cl" style="left:349.4px;top:362.72px;font:700 10.8px/1 'Liberation Mono',monospace;color:#fff;transform:scaleX(0.98);transform-origin:left 50%;">Track 3 take 1</span><span class="t cl" style="left:333.2px;top:483.82px;font:700 10.8px/1 'Liberation Mono',monospace;color:#fff;transform:scaleX(0.98);transform-origin:left 50%;">Track 4 take 1</span><svg width="1000" height="597" viewBox="0 0 1000 597" style="left:0;top:0"><g fill="#1a1216"><path d="M387.4 216.2L381.09 227.6M391.8 208.1L381.82 227.6M396.2 197.8L381.56 227.6M400.6 220.9L396.42 227.6M405 212.2L396.88 227.6M409.4 225L407.08 227.6M413.8 216.2L407.49 227.6M418.2 208.1L408.22 227.6M422.6 197.8L407.96 227.6M427 220.9L422.82 227.6M431.4 212.2L423.28 227.6M435.8 225L433.48 227.6M440.2 216.2L433.89 227.6M444.6 208.1L434.62 227.6M449 197.8L434.36 227.6M453.4 220.9L449.22 227.6M457.8 212.2L449.68 227.6M462.2 225L459.88 227.6M466.6 216.2L460.29 227.6M471 208.1L461.02 227.6M475.4 197.8L460.76 227.6M479.8 220.9L475.62 227.6M484.2 212.2L476.08 227.6M488.6 225L486.28 227.6M493 212.2L484.88 227.6M497.4 203.6L485.38 227.6M501.8 194.1L485.48 227.6M506.2 220.9L502.02 227.6M510.6 212.2L502.48 227.6M515 225L512.68 227.6M519.4 216.2L513.09 227.6M523.8 208.1L513.82 227.6M528.2 197.8L513.56 227.6M532.6 220.9L528.42 227.6M537 212.2L528.88 227.6M541.4 225L539.08 227.6M545.8 212.2L537.68 227.6M550.2 204.2L538.46 227.6M554.6 195.2L538.78 227.6M559 217.2L553.15 227.6M563.4 208.2L553.47 227.6M567.8 221.2L563.76 227.6M572.2 216.2L565.89 227.6M576.6 205.2L565.31 227.6M581 197.8L566.36 227.6M585.4 223.2L582.26 227.6M589.8 214.2L582.59 227.6M594.2 225.2L591.97 227.6M598.6 216.2L592.29 227.6M603 208.1L593.02 227.6M607.4 197.8L592.76 227.6M611.8 220.9L607.62 227.6M616.2 212.2L608.08 227.6M620.6 225L618.28 227.6M625 214.2L617.79 227.6M629.4 204.2L617.66 227.6M633.8 199.2L619.79 227.6M638.2 218.2L632.8 227.6M642.6 209.2L633.12 227.6M647 222.2L643.41 227.6M651.4 216.2L645.09 227.6M655.6 208.1L645.62 227.6M655.6 197.8L640.96 227.6" stroke="#24141f" stroke-width="0.9" stroke-dasharray="1 2.1" fill="none" opacity=".9"/><rect x="380.5" y="214.9" width="6.3" height="1.6"/><rect x="384.9" y="206.8" width="6.3" height="1.6"/><rect x="389.3" y="196.5" width="6.3" height="1.6"/><rect x="393.7" y="219.6" width="6.3" height="1.6"/><rect x="398.1" y="210.9" width="6.3" height="1.6"/><rect x="402.5" y="223.7" width="6.3" height="1.6"/><rect x="406.9" y="214.9" width="6.3" height="1.6"/><rect x="411.3" y="206.8" width="6.3" height="1.6"/><rect x="415.7" y="196.5" width="6.3" height="1.6"/><rect x="420.1" y="219.6" width="6.3" height="1.6"/><rect x="424.5" y="210.9" width="6.3" height="1.6"/><rect x="428.9" y="223.7" width="6.3" height="1.6"/><rect x="433.3" y="214.9" width="6.3" height="1.6"/><rect x="437.7" y="206.8" width="6.3" height="1.6"/><rect x="442.1" y="196.5" width="6.3" height="1.6"/><rect x="446.5" y="219.6" width="6.3" height="1.6"/><rect x="450.9" y="210.9" width="6.3" height="1.6"/><rect x="455.3" y="223.7" width="6.3" height="1.6"/><rect x="459.7" y="214.9" width="6.3" height="1.6"/><rect x="464.1" y="206.8" width="6.3" height="1.6"/><rect x="468.5" y="196.5" width="6.3" height="1.6"/><rect x="472.9" y="219.6" width="6.3" height="1.6"/><rect x="477.3" y="210.9" width="6.3" height="1.6"/><rect x="481.7" y="223.7" width="6.3" height="1.6"/><rect x="486.1" y="210.9" width="6.3" height="1.6"/><rect x="490.5" y="202.3" width="6.3" height="1.6"/><rect x="494.9" y="192.8" width="6.3" height="1.6"/><rect x="499.3" y="219.6" width="6.3" height="1.6"/><rect x="503.7" y="210.9" width="6.3" height="1.6"/><rect x="508.1" y="223.7" width="6.3" height="1.6"/><rect x="512.5" y="214.9" width="6.3" height="1.6"/><rect x="516.9" y="206.8" width="6.3" height="1.6"/><rect x="521.3" y="196.5" width="6.3" height="1.6"/><rect x="525.7" y="219.6" width="6.3" height="1.6"/><rect x="530.1" y="210.9" width="6.3" height="1.6"/><rect x="534.5" y="223.7" width="6.3" height="1.6"/><rect x="538.9" y="210.9" width="6.3" height="1.6"/><rect x="543.3" y="202.9" width="6.3" height="1.6"/><rect x="547.7" y="193.9" width="6.3" height="1.6"/><rect x="552.1" y="215.9" width="6.3" height="1.6"/><rect x="556.5" y="206.9" width="6.3" height="1.6"/><rect x="560.9" y="219.9" width="6.3" height="1.6"/><rect x="565.3" y="214.9" width="6.3" height="1.6"/><rect x="569.7" y="203.9" width="6.3" height="1.6"/><rect x="574.1" y="196.5" width="6.3" height="1.6"/><rect x="578.5" y="221.9" width="6.3" height="1.6"/><rect x="582.9" y="212.9" width="6.3" height="1.6"/><rect x="587.3" y="223.9" width="6.3" height="1.6"/><rect x="591.7" y="214.9" width="6.3" height="1.6"/><rect x="596.1" y="206.8" width="6.3" height="1.6"/><rect x="600.5" y="196.5" width="6.3" height="1.6"/><rect x="604.9" y="219.6" width="6.3" height="1.6"/><rect x="609.3" y="210.9" width="6.3" height="1.6"/><rect x="613.7" y="223.7" width="6.3" height="1.6"/><rect x="618.1" y="212.9" width="6.3" height="1.6"/><rect x="622.5" y="202.9" width="6.3" height="1.6"/><rect x="626.9" y="197.9" width="6.3" height="1.6"/><rect x="631.3" y="216.9" width="6.3" height="1.6"/><rect x="635.7" y="207.9" width="6.3" height="1.6"/><rect x="640.1" y="220.9" width="6.3" height="1.6"/><rect x="644.5" y="214.9" width="6.3" height="1.6"/><rect x="648.9" y="206.8" width="6.1" height="1.6"/><rect x="653.3" y="196.5" width="1.7" height="1.6"/></g><g fill="#1a1216"><path d="M669.4 216.2L663.09 227.6M673.8 208.1L663.82 227.6M678.2 197.8L663.56 227.6M682.6 220.9L678.42 227.6M687 212.2L678.88 227.6M691.4 225L689.08 227.6M695.8 216.2L689.49 227.6M700.2 208.1L690.22 227.6M704.6 197.8L689.96 227.6M709 220.9L704.82 227.6M713.4 212.2L705.28 227.6M717.8 225L715.48 227.6M722.2 216.2L715.89 227.6M726.6 208.1L716.62 227.6M731 197.8L716.36 227.6M735.4 220.9L731.22 227.6M739.8 212.2L731.68 227.6M744.2 225L741.88 227.6M748.6 216.2L742.29 227.6M753 208.1L743.02 227.6M757.4 197.8L742.76 227.6M761.8 220.9L757.62 227.6M766.2 212.2L758.08 227.6M770.6 225L768.28 227.6M775 212.2L766.88 227.6M779.4 203.6L767.38 227.6M783.8 194.1L767.48 227.6M788.2 220.9L784.02 227.6M792.6 212.2L784.48 227.6M797 225L794.68 227.6M801.4 216.2L795.09 227.6M805.8 208.1L795.82 227.6M810.2 197.8L795.56 227.6M814.6 220.9L810.42 227.6M819 212.2L810.88 227.6M823.4 225L821.08 227.6M827.8 212.2L819.68 227.6M832.2 204.2L820.46 227.6M836.6 195.2L820.78 227.6M841 217.2L835.15 227.6M845.4 208.2L835.47 227.6M849.8 221.2L845.76 227.6M854.2 216.2L847.89 227.6M858.6 205.2L847.31 227.6M863 197.8L848.36 227.6M867.4 223.2L864.26 227.6M871.8 214.2L864.59 227.6M876.2 225.2L873.97 227.6M880.6 216.2L874.29 227.6M885 208.1L875.02 227.6M889.4 197.8L874.76 227.6M893.8 220.9L889.62 227.6M898.2 212.2L890.08 227.6M902.6 225L900.28 227.6M907 214.2L899.79 227.6M911.4 204.2L899.66 227.6M915.8 199.2L901.79 227.6M920.2 218.2L914.8 227.6M924.6 209.2L915.12 227.6M929 222.2L925.41 227.6M933.4 216.2L927.09 227.6M937.1 208.1L927.12 227.6M937.1 197.8L922.46 227.6" stroke="#24141f" stroke-width="0.9" stroke-dasharray="1 2.1" fill="none" opacity=".9"/><rect x="662.5" y="214.9" width="6.3" height="1.6"/><rect x="666.9" y="206.8" width="6.3" height="1.6"/><rect x="671.3" y="196.5" width="6.3" height="1.6"/><rect x="675.7" y="219.6" width="6.3" height="1.6"/><rect x="680.1" y="210.9" width="6.3" height="1.6"/><rect x="684.5" y="223.7" width="6.3" height="1.6"/><rect x="688.9" y="214.9" width="6.3" height="1.6"/><rect x="693.3" y="206.8" width="6.3" height="1.6"/><rect x="697.7" y="196.5" width="6.3" height="1.6"/><rect x="702.1" y="219.6" width="6.3" height="1.6"/><rect x="706.5" y="210.9" width="6.3" height="1.6"/><rect x="710.9" y="223.7" width="6.3" height="1.6"/><rect x="715.3" y="214.9" width="6.3" height="1.6"/><rect x="719.7" y="206.8" width="6.3" height="1.6"/><rect x="724.1" y="196.5" width="6.3" height="1.6"/><rect x="728.5" y="219.6" width="6.3" height="1.6"/><rect x="732.9" y="210.9" width="6.3" height="1.6"/><rect x="737.3" y="223.7" width="6.3" height="1.6"/><rect x="741.7" y="214.9" width="6.3" height="1.6"/><rect x="746.1" y="206.8" width="6.3" height="1.6"/><rect x="750.5" y="196.5" width="6.3" height="1.6"/><rect x="754.9" y="219.6" width="6.3" height="1.6"/><rect x="759.3" y="210.9" width="6.3" height="1.6"/><rect x="763.7" y="223.7" width="6.3" height="1.6"/><rect x="768.1" y="210.9" width="6.3" height="1.6"/><rect x="772.5" y="202.3" width="6.3" height="1.6"/><rect x="776.9" y="192.8" width="6.3" height="1.6"/><rect x="781.3" y="219.6" width="6.3" height="1.6"/><rect x="785.7" y="210.9" width="6.3" height="1.6"/><rect x="790.1" y="223.7" width="6.3" height="1.6"/><rect x="794.5" y="214.9" width="6.3" height="1.6"/><rect x="798.9" y="206.8" width="6.3" height="1.6"/><rect x="803.3" y="196.5" width="6.3" height="1.6"/><rect x="807.7" y="219.6" width="6.3" height="1.6"/><rect x="812.1" y="210.9" width="6.3" height="1.6"/><rect x="816.5" y="223.7" width="6.3" height="1.6"/><rect x="820.9" y="210.9" width="6.3" height="1.6"/><rect x="825.3" y="202.9" width="6.3" height="1.6"/><rect x="829.7" y="193.9" width="6.3" height="1.6"/><rect x="834.1" y="215.9" width="6.3" height="1.6"/><rect x="838.5" y="206.9" width="6.3" height="1.6"/><rect x="842.9" y="219.9" width="6.3" height="1.6"/><rect x="847.3" y="214.9" width="6.3" height="1.6"/><rect x="851.7" y="203.9" width="6.3" height="1.6"/><rect x="856.1" y="196.5" width="6.3" height="1.6"/><rect x="860.5" y="221.9" width="6.3" height="1.6"/><rect x="864.9" y="212.9" width="6.3" height="1.6"/><rect x="869.3" y="223.9" width="6.3" height="1.6"/><rect x="873.7" y="214.9" width="6.3" height="1.6"/><rect x="878.1" y="206.8" width="6.3" height="1.6"/><rect x="882.5" y="196.5" width="6.3" height="1.6"/><rect x="886.9" y="219.6" width="6.3" height="1.6"/><rect x="891.3" y="210.9" width="6.3" height="1.6"/><rect x="895.7" y="223.7" width="6.3" height="1.6"/><rect x="900.1" y="212.9" width="6.3" height="1.6"/><rect x="904.5" y="202.9" width="6.3" height="1.6"/><rect x="908.9" y="197.9" width="6.3" height="1.6"/><rect x="913.3" y="216.9" width="6.3" height="1.6"/><rect x="917.7" y="207.9" width="6.3" height="1.6"/><rect x="922.1" y="220.9" width="6.3" height="1.6"/><rect x="926.5" y="214.9" width="6.3" height="1.6"/><rect x="930.9" y="206.8" width="5.6" height="1.6"/><rect x="935.3" y="196.5" width="1.2" height="1.6"/></g><g fill="#1a1216"><rect x="736" y="339.2" width="60" height="1.5"/><rect x="825" y="329.5" width="13" height="1.5"/><rect x="838" y="328.3" width="13" height="1.5"/><rect x="872" y="334.3" width="16" height="1.5"/><rect x="888" y="333.2" width="14" height="1.5"/><rect x="902" y="331.8" width="8" height="1.5"/><rect x="912" y="337.8" width="12" height="1.5"/><rect x="924" y="336.3" width="12.5" height="1.5"/></g><g stroke="#0d1a28" stroke-width=".6" opacity=".5"><path d="M344 376.4H710M344 417H710M328 497.6H658M328 538.2H658"/></g><g fill="#000"><path d="M344 376.22L344.6 376.19L345.2 376.2L345.8 376.23L346.4 376.23L347 376.23L347.6 376.21L348.2 376.22L348.8 376.19L349.4 376.19L350 376.13L350.6 376.16L351.2 376.22L351.8 376.22L352.4 376.22L353 376.19L353.6 376.2L354.2 376.23L354.8 376.18L355.4 376.22L356 376.21L356.6 376.17L357.2 376.22L357.8 376.2L358.4 376.17L359 376.13L359.6 376.21L360.2 376.22L360.8 376.23L361.4 376.17L362 376.15L362.6 376.18L363.2 376.19L363.8 376.16L364.4 376.2L365 376.23L365.6 376.19L366.2 376.16L366.8 376.21L367.4 376.23L368 376.22L368.6 376.23L369.2 376.22L369.8 376.21L370.4 376.23L371 376.2L371.6 376.16L372.2 376.22L372.8 376.21L373.4 376.14L374 376.22L374.6 376.22L375.2 376.19L375.8 376.23L376.4 376.21L377 376.14L377.6 376.2L378.2 376.18L378.8 376.15L379.4 376.15L380 376.21L380.6 376.22L381.2 376.23L381.8 376.22L382.4 376.21L383 376.23L383.6 376.23L384.2 376.23L384.8 376.19L385.4 376.22L386 376.21L386.6 376.16L387.2 376.21L387.8 376.23L388.4 376.21L389 376.16L389.6 376.23L390.2 376.2L390.8 376.2L391.4 376.2L392 376.15L392.6 376.22L393.2 376.22L393.8 376.2L394.4 376.22L395 375.37L395.6 373.44L396.2 374.32L396.8 375.27L397.4 374.43L398 375.48L398.6 372.96L399.2 375.39L399.8 375.6L400.4 375.58L401 375.64L401.6 375.25L402.2 375.64L402.8 375.53L403.4 374.21L404 372.11L404.6 375.56L405.2 375.3L405.8 375.19L406.4 375.63L407 375.6L407.6 374.26L408.2 375.49L408.8 375.37L409.4 375.06L410 374.63L410.6 375.03L411.2 374.93L411.8 374.81L412.4 374.67L413 373.61L413.6 374.17L414.2 371.98L414.8 374.17L415.4 369.3L416 372.31L416.6 373.67L417.2 368.9L417.8 369.48L418.4 373.38L419 368.48L419.6 372.92L420.2 368.95L420.8 371.82L421.4 368.65L422 371.32L422.6 372.02L423.2 370.38L423.8 369.73L424.4 371.08L425 368.94L425.6 368.68L426.2 366.23L426.8 371.33L427.4 371.74L428 371.44L428.6 369.42L429.2 371.92L429.8 371.01L430.4 367.04L431 372.05L431.6 367.72L432.2 371.98L432.8 371.81L433.4 368.5L434 372.52L434.6 373.21L435.2 368.83L435.8 368.82L436.4 372.78L437 372.17L437.6 373.1L438.2 369.06L438.8 372.41L439.4 372.83L440 373.46L440.6 372.54L441.2 371.46L441.8 374.38L442.4 373.84L443 374.37L443.6 374.26L444.2 373.54L444.8 374.31L445.4 374.21L446 373.88L446.6 369.83L447.2 373.93L447.8 373.28L448.4 373.12L449 373.92L449.6 373.08L450.2 374.01L450.8 373.98L451.4 374.01L452 372L452.6 370.68L453.2 373.24L453.8 371.58L454.4 373.91L455 371.08L455.6 372.62L456.2 373.15L456.8 373.83L457.4 371.92L458 373.11L458.6 372.91L459.2 373.66L459.8 373.7L460.4 373.69L461 373.46L461.6 373.36L462.2 368.79L462.8 373.51L463.4 373.37L464 373.55L464.6 372.91L465.2 373.23L465.8 369.4L466.4 370.57L467 372.23L467.6 370.65L468.2 372.43L468.8 373.46L469.4 373.63L470 371.08L470.6 372.28L471.2 372.65L471.8 370.85L472.4 373.7L473 369.02L473.6 368.92L474.2 373.65L474.8 372.95L475.4 373.8L476 370.85L476.6 372.63L477.2 372.92L477.8 373.75L478.4 372.35L479 373.8L479.6 370.86L480.2 373.74L480.8 373.43L481.4 370.75L482 371.89L482.6 373.69L483.2 373.81L483.8 372.95L484.4 371.89L485 373.07L485.6 370.32L486.2 374.24L486.8 371L487.4 374.25L488 370.39L488.6 374.33L489.2 370.79L489.8 374.28L490.4 374.02L491 370.74L491.6 373.51L492.2 373.19L492.8 371.14L493.4 371.49L494 374.41L494.6 374.39L495.2 374.17L495.8 373.53L496.4 374.37L497 374.38L497.6 370.78L498.2 374.4L498.8 374.37L499.4 374.27L500 373.87L500.6 374.08L501.2 374.09L501.8 374.1L502.4 370.56L503 373.96L503.6 373.18L504.2 369.61L504.8 370.23L505.4 374.17L506 371.13L506.6 374.07L507.2 369.57L507.8 373.04L508.4 373.52L509 369.25L509.6 369.21L510.2 373.79L510.8 370.32L511.4 373.44L512 373.86L512.6 370.15L513.2 373.66L513.8 373.32L514.4 371.75L515 372.67L515.6 373.14L516.2 373.44L516.8 373.71L517.4 372.79L518 373.65L518.6 371.01L519.2 373.65L519.8 373.64L520.4 371.65L521 373.45L521.6 372.84L522.2 369.8L522.8 371.1L523.4 372.25L524 373.45L524.6 372.89L525.2 372.55L525.8 372.83L526.4 371.94L527 371.9L527.6 373.06L528.2 373.48L528.8 373.69L529.4 372.02L530 372.76L530.6 369.62L531.2 371.27L531.8 373.6L532.4 370.9L533 372.99L533.6 369.59L534.2 373.83L534.8 370.78L535.4 373L536 370.38L536.6 373.35L537.2 373.81L537.8 369.61L538.4 371.15L539 373.38L539.6 373.99L540.2 373.47L540.8 373.77L541.4 374.14L542 372.11L542.6 373.93L543.2 373.65L543.8 373.17L544.4 372.39L545 374.33L545.6 374.06L546.2 374.18L546.8 374.01L547.4 373.53L548 373.89L548.6 373.98L549.2 371.81L549.8 374L550.4 374.39L551 371.42L551.6 371.32L552.2 373.87L552.8 374.13L553.4 369.91L554 374.41L554.6 374.21L555.2 373.78L555.8 370.55L556.4 373.91L557 374.21L557.6 374.08L558.2 371.82L558.8 374.26L559.4 374.17L560 372.8L560.6 373.26L561.2 373L561.8 370.35L562.4 367.25L563 372.28L563.6 371.05L564.2 371.78L564.8 371.14L565.4 366.9L566 371.43L566.6 371.46L567.2 371.62L567.8 370.93L568.4 369.72L569 366.73L569.6 371.51L570.2 367.56L570.8 366.16L571.4 371.01L572 370.5L572.6 371.34L573.2 371.53L573.8 367.97L574.4 370.44L575 370.38L575.6 366.16L576.2 368.24L576.8 368.95L577.4 367.23L578 370.95L578.6 367.77L579.2 370.24L579.8 370.16L580.4 370.66L581 371.14L581.6 367.98L582.2 367.86L582.8 369.64L583.4 369.66L584 365.83L584.6 371.12L585.2 370.47L585.8 365.39L586.4 370L587 369.45L587.6 371L588.2 369.33L588.8 369.36L589.4 369.14L590 368.43L590.6 370.47L591.2 369.66L591.8 369.74L592.4 371.52L593 369.28L593.6 366.28L594.2 371.13L594.8 371.58L595.4 371.07L596 371.73L596.6 369.03L597.2 371.54L597.8 371.87L598.4 371.96L599 366.77L599.6 369.87L600.2 368.9L600.8 371.35L601.4 370.15L602 367.7L602.6 369.99L603.2 372.09L603.8 372.01L604.4 370.53L605 369.19L605.6 367.67L606.2 369.24L606.8 367.34L607.4 372.04L608 368.08L608.6 370.4L609.2 370.44L609.8 372.03L610.4 368.51L611 371.7L611.6 369.93L612.2 370.79L612.8 371.76L613.4 366.08L614 366.32L614.6 371.68L615.2 371.6L615.8 371.59L616.4 366.71L617 371.35L617.6 368.42L618.2 365.82L618.8 369.48L619.4 367.81L620 370.97L620.6 371.31L621.2 371.24L621.8 370.95L622.4 371.21L623 370.44L623.6 367.26L624.2 371.15L624.8 370.1L625.4 371.1L626 367.62L626.6 371.07L627.2 369.5L627.8 370.69L628.4 370.68L629 370.98L629.6 369.3L630.2 371.18L630.8 371.03L631.4 370.43L632 371.26L632.6 368.82L633.2 369.14L633.8 371.16L634.4 371.23L635 371.22L635.6 367.02L636.2 367.68L636.8 366.89L637.4 370.64L638 371.11L638.6 367.21L639.2 370.87L639.8 371.65L640.4 368.94L641 371.4L641.6 366.03L642.2 371.9L642.8 371.06L643.4 370.7L644 370.57L644.6 372.08L645.2 369.9L645.8 370.32L646.4 368.31L647 371.8L647.6 368.64L648.2 371.37L648.8 370.5L649.4 367.76L650 370.18L650.6 371.52L651.2 371.83L651.8 368.33L652.4 371.35L653 371.51L653.6 371.76L654.2 369.7L654.8 370.82L655.4 367.6L656 371.82L656.6 371.56L657.2 370.26L657.8 369.98L658.4 370.96L659 369.12L659.6 368.29L660.2 369.82L660.8 369.98L661.4 365.59L662 371.15L662.6 370.51L663.2 371.22L663.8 371.08L664.4 370.3L665 371.12L665.6 369.08L666.2 370.86L666.8 371.16L667.4 371.17L668 367.28L668.6 370.81L669.2 369.11L669.8 369.24L670.4 364.8L671 365.63L671.6 365.97L672.2 371.09L672.8 370.72L673.4 365.19L674 369.91L674.6 367.09L675.2 369.76L675.8 369.55L676.4 371.28L677 370.84L677.6 368L678.2 368.32L678.8 367.46L679.4 371.39L680 371.34L680.6 371.56L681.2 367.96L681.8 371.53L682.4 371.29L683 369.44L683.6 370.39L684.2 371.82L684.8 369.71L685.4 370.3L686 369.13L686.6 371.57L687.2 367.69L687.8 366.48L688.4 371.8L689 372.03L689.6 368.62L690.2 367.77L690.8 371.3L691.4 369.76L692 371.5L692.6 372.51L693.2 368.7L693.8 373.41L694.4 374.35L695 374.72L695.6 374.67L696.2 372.41L696.8 376.06L697.4 376.21L698 376.22L698.6 376.2L699.2 376.16L699.8 376.15L700.4 376.2L701 376.22L701.6 376.19L702.2 376.18L702.8 376.21L703.4 376.23L704 376.21L704.6 376.18L705.2 376.16L705.8 376.17L706.4 376.22L707 376.2L707.6 376.21L708.2 376.18L708.8 376.15L709.4 376.22L709.4 376.59L708.8 376.58L708.2 376.64L707.6 376.59L707 376.59L706.4 376.62L705.8 376.59L705.2 376.64L704.6 376.57L704 376.58L703.4 376.57L702.8 376.66L702.2 376.58L701.6 376.57L701 376.58L700.4 376.6L699.8 376.66L699.2 376.62L698.6 376.61L698 376.57L697.4 376.64L696.8 376.77L696.2 377.19L695.6 377.59L695 378.03L694.4 378.43L693.8 381.13L693.2 379.75L692.6 379.73L692 380.15L691.4 380.63L690.8 381.02L690.2 381.43L689.6 382.32L689 381.76L688.4 382.32L687.8 385.23L687.2 380.93L686.6 385.82L686 381.58L685.4 381.06L684.8 385.98L684.2 382.21L683.6 382.77L683 381.52L682.4 384.17L681.8 386.3L681.2 386.7L680.6 384.22L680 381.79L679.4 383.24L678.8 381.77L678.2 385.02L677.6 382.55L677 387.34L676.4 382.82L675.8 385.5L675.2 381.8L674.6 385.08L674 381.66L673.4 381.66L672.8 382.91L672.2 387.38L671.6 387.73L671 387.83L670.4 384.35L669.8 381.75L669.2 381.71L668.6 385.65L668 386.97L667.4 381.66L666.8 382.41L666.2 386.51L665.6 385.15L665 385.56L664.4 384.06L663.8 383.69L663.2 381.41L662.6 383.89L662 387.24L661.4 381.47L660.8 381.51L660.2 384.04L659.6 381.18L659 384.39L658.4 381.24L657.8 385.41L657.2 384.69L656.6 384.98L656 380.97L655.4 380.91L654.8 382.46L654.2 386.4L653.6 384.39L653 381.19L652.4 381.49L651.8 381.34L651.2 381.5L650.6 381.28L650 382.04L649.4 380.64L648.8 384.57L648.2 380.65L647.6 385.08L647 380.89L646.4 381.89L645.8 381.55L645.2 381.48L644.6 382.12L644 386.26L643.4 382.11L642.8 382.57L642.2 381.12L641.6 380.91L641 380.93L640.4 382.46L639.8 387.06L639.2 381.05L638.6 381.24L638 381.92L637.4 386.4L636.8 381.38L636.2 381.31L635.6 382.03L635 386.28L634.4 382.14L633.8 382.25L633.2 386.75L632.6 382.64L632 381.59L631.4 381.58L630.8 382.1L630.2 382.39L629.6 384.04L629 381.98L628.4 384.24L627.8 382.19L627.2 381.76L626.6 386.72L626 382.4L625.4 385.18L624.8 382.62L624.2 384.78L623.6 381.72L623 387.95L622.4 383.76L621.8 382.99L621.2 382.97L620.6 382.25L620 381.53L619.4 383.52L618.8 387.39L618.2 382.75L617.6 382.21L617 381.36L616.4 381.22L615.8 381.24L615.2 385.82L614.6 381.07L614 383.47L613.4 386.14L612.8 381.27L612.2 384.42L611.6 386.52L611 380.9L610.4 381.21L609.8 386.28L609.2 384.03L608.6 381.65L608 386.36L607.4 386.35L606.8 385.59L606.2 380.89L605.6 381.71L605 382.9L604.4 380.64L603.8 380.93L603.2 383.27L602.6 381.71L602 382.84L601.4 380.7L600.8 382.52L600.2 383.46L599.6 382.19L599 381.58L598.4 380.84L597.8 381.75L597.2 380.94L596.6 381.62L596 382.24L595.4 384.41L594.8 381.95L594.2 381.14L593.6 381.28L593 381.36L592.4 386.65L591.8 382.57L591.2 387.13L590.6 387.14L590 385.8L589.4 381.86L588.8 382.51L588.2 381.84L587.6 381.57L587 384.14L586.4 382.75L585.8 382.95L585.2 381.66L584.6 387.67L584 381.67L583.4 388.05L582.8 386.91L582.2 383.24L581.6 383.87L581 388.03L580.4 385.24L579.8 384.17L579.2 385.98L578.6 382.51L578 382.09L577.4 382.43L576.8 382.71L576.2 381.49L575.6 382.71L575 382.44L574.4 382.53L573.8 381.55L573.2 382.66L572.6 382.13L572 382.82L571.4 381.32L570.8 382.85L570.2 382.56L569.6 382.88L569 382.98L568.4 381.19L567.8 380.88L567.2 385.61L566.6 381.57L566 386.19L565.4 385.98L564.8 384.74L564.2 382.12L563.6 382.58L563 382.24L562.4 380.48L561.8 382.9L561.2 381.78L560.6 380.72L560 379.51L559.4 378.79L558.8 380.57L558.2 381.15L557.6 382.51L557 378.91L556.4 382.9L555.8 378.47L555.2 382.31L554.6 380.33L554 380.98L553.4 379.02L552.8 381.86L552.2 378.66L551.6 378.67L551 382.19L550.4 378.84L549.8 378.56L549.2 378.82L548.6 378.4L548 378.85L547.4 379.08L546.8 382.06L546.2 379.05L545.6 381.71L545 378.65L544.4 378.96L543.8 379.24L543.2 381.08L542.6 383.12L542 378.6L541.4 378.64L540.8 378.64L540.2 378.68L539.6 378.7L539 379.42L538.4 379.73L537.8 378.81L537.2 383.19L536.6 379.63L536 382.94L535.4 381.03L534.8 379.76L534.2 382.05L533.6 380.43L533 379.13L532.4 379.53L531.8 379.16L531.2 379.03L530.6 381.69L530 379.66L529.4 379.15L528.8 380.23L528.2 380.12L527.6 382.74L527 379.18L526.4 383.93L525.8 382.9L525.2 379.92L524.6 379.86L524 379.27L523.4 380.04L522.8 383.34L522.2 379.6L521.6 379.29L521 380.03L520.4 380.92L519.8 380.24L519.2 380.35L518.6 380.13L518 379.18L517.4 379.11L516.8 380.86L516.2 383.71L515.6 379.51L515 380.61L514.4 382.71L513.8 379.05L513.2 382.45L512.6 380.44L512 379.44L511.4 380.46L510.8 379.77L510.2 382.79L509.6 379.65L509 379.8L508.4 378.92L507.8 381.9L507.2 378.74L506.6 378.76L506 379.47L505.4 382.97L504.8 379.62L504.2 379.37L503.6 378.57L503 378.53L502.4 378.98L501.8 378.5L501.2 380.12L500.6 378.52L500 381.74L499.4 378.62L498.8 378.81L498.2 382.42L497.6 378.41L497 378.44L496.4 378.56L495.8 382.2L495.2 378.38L494.6 378.39L494 378.64L493.4 378.4L492.8 379.29L492.2 378.62L491.6 378.6L491 379.6L490.4 378.56L489.8 378.54L489.2 378.46L488.6 378.48L488 378.59L487.4 378.5L486.8 378.57L486.2 381.05L485.6 378.81L485 379L484.4 380.56L483.8 378.65L483.2 378.73L482.6 378.83L482 383.08L481.4 379.66L480.8 379.5L480.2 378.87L479.6 378.84L479 380.15L478.4 378.96L477.8 381.04L477.2 379.76L476.6 379L476 379.19L475.4 379.08L474.8 380.24L474.2 380.61L473.6 379.23L473 383.2L472.4 379.35L471.8 380.38L471.2 382.34L470.6 381.96L470 379.2L469.4 379.84L468.8 379.22L468.2 380L467.6 379.19L467 384.13L466.4 379.24L465.8 384.05L465.2 379.24L464.6 379.23L464 379.17L463.4 379.26L462.8 379.15L462.2 379.22L461.6 380.51L461 381.72L460.4 379.1L459.8 379.17L459.2 380.3L458.6 383.24L458 380.29L457.4 382.29L456.8 379.19L456.2 380.07L455.6 380.51L455 379L454.4 379.21L453.8 379L453.2 379.04L452.6 378.86L452 381.31L451.4 383.18L450.8 380.61L450.2 382.25L449.6 378.67L449 380.1L448.4 382.39L447.8 379.37L447.2 378.6L446.6 380.69L446 379.92L445.4 378.65L444.8 379.46L444.2 378.46L443.6 378.46L443 378.43L442.4 378.47L441.8 379.15L441.2 378.77L440.6 378.61L440 378.38L439.4 384.79L438.8 379.74L438.2 379.6L437.6 380.56L437 381.96L436.4 379.85L435.8 380.53L435.2 381.71L434.6 380.71L434 380.28L433.4 379.82L432.8 381.57L432.2 380.73L431.6 382.33L431 382.42L430.4 383.08L429.8 381.98L429.2 381.57L428.6 381.13L428 384.2L427.4 380.75L426.8 380.89L426.2 381.23L425.6 384.86L425 386.16L424.4 383.74L423.8 381.03L423.2 381.12L422.6 382.36L422 380.84L421.4 385.79L420.8 385L420.2 383.99L419.6 382.04L419 380.82L418.4 380.88L417.8 379.3L417.2 379.26L416.6 379.05L416 378.91L415.4 379.11L414.8 381.07L414.2 378.64L413.6 381L413 378.29L412.4 382.12L411.8 378.37L411.2 379.52L410.6 377.95L410 377.91L409.4 377.58L408.8 377.52L408.2 377.34L407.6 377.28L407 377.27L406.4 377.25L405.8 377.23L405.2 377.26L404.6 377.3L404 377.23L403.4 379.59L402.8 377.52L402.2 377.15L401.6 377.33L401 380.41L400.4 378.03L399.8 377.42L399.2 380.28L398.6 377.42L398 377.49L397.4 378.29L396.8 377.24L396.2 377.15L395.6 377.38L395 377.56L394.4 376.58L393.8 376.63L393.2 376.63L392.6 376.59L392 376.62L391.4 376.67L390.8 376.57L390.2 376.58L389.6 376.66L389 376.58L388.4 376.58L387.8 376.58L387.2 376.6L386.6 376.67L386 376.58L385.4 376.59L384.8 376.58L384.2 376.65L383.6 376.59L383 376.58L382.4 376.57L381.8 376.58L381.2 376.57L380.6 376.61L380 376.59L379.4 376.64L378.8 376.63L378.2 376.57L377.6 376.61L377 376.62L376.4 376.6L375.8 376.59L375.2 376.58L374.6 376.6L374 376.58L373.4 376.58L372.8 376.65L372.2 376.59L371.6 376.65L371 376.65L370.4 376.59L369.8 376.65L369.2 376.58L368.6 376.63L368 376.58L367.4 376.59L366.8 376.62L366.2 376.58L365.6 376.67L365 376.62L364.4 376.62L363.8 376.66L363.2 376.59L362.6 376.61L362 376.58L361.4 376.61L360.8 376.62L360.2 376.6L359.6 376.63L359 376.58L358.4 376.58L357.8 376.65L357.2 376.61L356.6 376.62L356 376.58L355.4 376.61L354.8 376.59L354.2 376.58L353.6 376.57L353 376.59L352.4 376.61L351.8 376.64L351.2 376.58L350.6 376.58L350 376.57L349.4 376.59L348.8 376.66L348.2 376.58L347.6 376.64L347 376.57L346.4 376.59L345.8 376.6L345.2 376.59L344.6 376.57L344 376.58Z"/><path d="M344 416.8L344.6 416.82L345.2 416.82L345.8 416.74L346.4 416.75L347 416.74L347.6 416.76L348.2 416.78L348.8 416.82L349.4 416.74L350 416.79L350.6 416.81L351.2 416.83L351.8 416.78L352.4 416.83L353 416.81L353.6 416.81L354.2 416.8L354.8 416.82L355.4 416.75L356 416.82L356.6 416.82L357.2 416.8L357.8 416.8L358.4 416.82L359 416.82L359.6 416.79L360.2 416.81L360.8 416.81L361.4 416.8L362 416.77L362.6 416.73L363.2 416.82L363.8 416.81L364.4 416.74L365 416.77L365.6 416.77L366.2 416.82L366.8 416.83L367.4 416.82L368 416.78L368.6 416.75L369.2 416.75L369.8 416.75L370.4 416.82L371 416.81L371.6 416.78L372.2 416.82L372.8 416.77L373.4 416.78L374 416.79L374.6 416.8L375.2 416.82L375.8 416.78L376.4 416.82L377 416.76L377.6 416.82L378.2 416.82L378.8 416.82L379.4 416.82L380 416.81L380.6 416.75L381.2 416.78L381.8 416.74L382.4 416.81L383 416.8L383.6 416.76L384.2 416.82L384.8 416.78L385.4 416.8L386 416.76L386.6 416.75L387.2 416.83L387.8 416.82L388.4 416.79L389 416.82L389.6 416.8L390.2 416.81L390.8 416.83L391.4 416.82L392 416.81L392.6 416.83L393.2 416.78L393.8 416.82L394.4 416.82L395 416.13L395.6 416L396.2 413.1L396.8 415.88L397.4 416.02L398 414.66L398.6 415.84L399.2 412.84L399.8 416.16L400.4 416.21L401 415.88L401.6 416.24L402.2 416.19L402.8 416.24L403.4 413.41L404 416.23L404.6 416.23L405.2 416.24L405.8 416.24L406.4 414.69L407 416.07L407.6 413.67L408.2 414.16L408.8 413.44L409.4 414.84L410 415.81L410.6 415.43L411.2 412.28L411.8 414.89L412.4 415.1L413 415.14L413.6 414.38L414.2 413.46L414.8 414.39L415.4 414.61L416 414.47L416.6 414.02L417.2 413.92L417.8 414.11L418.4 413.98L419 411.15L419.6 413.63L420.2 408.16L420.8 410.84L421.4 412.46L422 412.59L422.6 407.1L423.2 407.16L423.8 406.79L424.4 409.53L425 412.63L425.6 409.3L426.2 411.51L426.8 412.62L427.4 410.8L428 407.59L428.6 412.62L429.2 412.36L429.8 409.2L430.4 412.03L431 412.65L431.6 411.93L432.2 412.9L432.8 412.14L433.4 409.87L434 413.7L434.6 413.79L435.2 413.81L435.8 413.28L436.4 412.53L437 413.71L437.6 412.92L438.2 413L438.8 408.85L439.4 412.89L440 414.08L440.6 411.06L441.2 414.56L441.8 414.99L442.4 413.46L443 414.25L443.6 413.84L444.2 411.42L444.8 414.61L445.4 411.74L446 414.29L446.6 414.86L447.2 414.1L447.8 412.16L448.4 414L449 413.72L449.6 414.57L450.2 414.54L450.8 413.96L451.4 414.39L452 413.61L452.6 413.72L453.2 414.58L453.8 412.87L454.4 414.52L455 414.5L455.6 414.48L456.2 413.06L456.8 414.05L457.4 414.27L458 411.82L458.6 412.13L459.2 414.14L459.8 409.63L460.4 414.3L461 409.99L461.6 413.31L462.2 411.18L462.8 410.61L463.4 413.76L464 409.76L464.6 409.93L465.2 409.51L465.8 414.18L466.4 414.08L467 413.73L467.6 413.13L468.2 413.99L468.8 411.03L469.4 409.8L470 412.74L470.6 413.4L471.2 413.14L471.8 414.17L472.4 414.3L473 411.61L473.6 410.09L474.2 413.9L474.8 411.09L475.4 414.37L476 409.71L476.6 413.44L477.2 413.39L477.8 411.21L478.4 414.34L479 414.47L479.6 414.57L480.2 410.64L480.8 414.63L481.4 411.26L482 411.29L482.6 414.71L483.2 414.59L483.8 414.76L484.4 414.78L485 412.85L485.6 413.7L486.2 414.56L486.8 414.4L487.4 414.18L488 414.89L488.6 414.91L489.2 414.32L489.8 414.75L490.4 414.88L491 414.98L491.6 414.94L492.2 414.11L492.8 414.35L493.4 411.65L494 414.9L494.6 413.5L495.2 414.84L495.8 414.98L496.4 411.48L497 411.53L497.6 414.97L498.2 414.94L498.8 414.82L499.4 413.88L500 414.96L500.6 414.2L501.2 414.08L501.8 411.57L502.4 413.82L503 414.7L503.6 414.55L504.2 414.27L504.8 413.84L505.4 414.75L506 414.34L506.6 414.21L507.2 414.48L507.8 414.09L508.4 411.31L509 411.47L509.6 412.12L510.2 414.37L510.8 413.33L511.4 414.5L512 409.92L512.6 413.48L513.2 414.4L513.8 411.66L514.4 413.99L515 414.37L515.6 412.56L516.2 413.49L516.8 414.29L517.4 413.69L518 412.95L518.6 409.7L519.2 413.84L519.8 414.24L520.4 413.55L521 414.11L521.6 414.19L522.2 412.98L522.8 410.19L523.4 410.53L524 412.27L524.6 412.77L525.2 414.22L525.8 411.1L526.4 413.25L527 413.65L527.6 409.81L528.2 413.85L528.8 414.03L529.4 413.8L530 414.25L530.6 413L531.2 414.34L531.8 411.49L532.4 413.64L533 414.38L533.6 413.14L534.2 412.32L534.8 411.85L535.4 412.5L536 413.48L536.6 414.56L537.2 413.53L537.8 414.63L538.4 410.22L539 413.57L539.6 414.54L540.2 414.7L540.8 410.46L541.4 414.8L542 412.73L542.6 414.68L543.2 414.63L543.8 414.67L544.4 414.73L545 410.63L545.6 414.94L546.2 414.27L546.8 414.98L547.4 410.65L548 414.05L548.6 410.53L549.2 412.11L549.8 410.97L550.4 414.29L551 412.02L551.6 411.05L552.2 414.8L552.8 415.01L553.4 415.01L554 415L554.6 414.98L555.2 411.46L555.8 414.68L556.4 414.49L557 414.01L557.6 414.11L558.2 412.67L558.8 414.77L559.4 414.37L560 411.55L560.6 413.87L561.2 413.44L561.8 408.49L562.4 412.34L563 412.88L563.6 410.62L564.2 408.85L564.8 412.24L565.4 411.93L566 409.19L566.6 412.49L567.2 411.71L567.8 409.85L568.4 412.44L569 411.26L569.6 412.17L570.2 411L570.8 410.53L571.4 409.47L572 412.16L572.6 406.02L573.2 409.07L573.8 412.05L574.4 407.91L575 411.98L575.6 408.28L576.2 411.56L576.8 411.89L577.4 411.32L578 411.81L578.6 407.54L579.2 407.98L579.8 410.85L580.4 411.72L581 407.75L581.6 407.1L582.2 411.6L582.8 406.41L583.4 411.72L584 411.57L584.6 411.68L585.2 409.63L585.8 407.97L586.4 411.73L587 409.29L587.6 411.69L588.2 411.19L588.8 411.79L589.4 411.65L590 406.22L590.6 411.83L591.2 405.89L591.8 411.36L592.4 412.07L593 410.09L593.6 412.04L594.2 408.53L594.8 410.37L595.4 410.7L596 411.31L596.6 406.73L597.2 409.04L597.8 407.39L598.4 412.02L599 411.48L599.6 411.14L600.2 412.56L600.8 412.56L601.4 409.46L602 412.68L602.6 410.65L603.2 412.31L603.8 412.7L604.4 411.13L605 410.58L605.6 412.61L606.2 410.22L606.8 410.23L607.4 407.81L608 412.71L608.6 412.64L609.2 409.94L609.8 412.62L610.4 411.32L611 407.62L611.6 411.27L612.2 407.45L612.8 407.54L613.4 412.37L614 412.23L614.6 410.98L615.2 411.22L615.8 412.13L616.4 412.06L617 409.69L617.6 410.7L618.2 411.35L618.8 407.38L619.4 411.62L620 411.91L620.6 407.85L621.2 410.44L621.8 409.4L622.4 405.45L623 411.75L623.6 410.15L624.2 407.7L624.8 408.1L625.4 406.04L626 405.33L626.6 410.12L627.2 407.05L627.8 405.38L628.4 407.06L629 411.68L629.6 411.43L630.2 406.13L630.8 409.49L631.4 409.92L632 408.08L632.6 411.42L633.2 411.76L633.8 410.49L634.4 407.24L635 410.2L635.6 409.99L636.2 406.32L636.8 411.62L637.4 410.22L638 411.98L638.6 407.99L639.2 410.7L639.8 410.36L640.4 412.19L641 410.76L641.6 408.66L642.2 406.84L642.8 412.13L643.4 411L644 411.11L644.6 412.23L645.2 412.6L645.8 412.64L646.4 412.69L647 411.27L647.6 411.41L648.2 412.66L648.8 410.87L649.4 412.03L650 409.33L650.6 410.24L651.2 409.36L651.8 412.64L652.4 411.46L653 412.49L653.6 407.38L654.2 412.57L654.8 409.32L655.4 409.19L656 408.25L656.6 410.1L657.2 409.17L657.8 410.01L658.4 412.02L659 411.45L659.6 411.93L660.2 411.71L660.8 408.09L661.4 410.44L662 409.65L662.6 408.03L663.2 411.32L663.8 411.17L664.4 411.61L665 411.7L665.6 407.71L666.2 408.14L666.8 407.86L667.4 410.29L668 409.3L668.6 411.64L669.2 411.71L669.8 408.21L670.4 408.01L671 410.41L671.6 407.84L672.2 408.03L672.8 410.17L673.4 411.76L674 411.19L674.6 411.35L675.2 407.49L675.8 411.85L676.4 411.88L677 411.01L677.6 409.41L678.2 411.6L678.8 410.33L679.4 407.11L680 411.47L680.6 410.63L681.2 410.03L681.8 408.52L682.4 407.05L683 412.31L683.6 412.19L684.2 409.91L684.8 411.03L685.4 407.32L686 412.54L686.6 412.54L687.2 407.14L687.8 412.64L688.4 411.4L689 408.47L689.6 412.65L690.2 405.96L690.8 410.02L691.4 407.29L692 409.5L692.6 409.43L693.2 410.83L693.8 414.45L694.4 414.58L695 412.48L695.6 415.73L696.2 416.25L696.8 416.53L697.4 416.81L698 416.79L698.6 416.75L699.2 416.81L699.8 416.82L700.4 416.82L701 416.83L701.6 416.8L702.2 416.8L702.8 416.76L703.4 416.78L704 416.73L704.6 416.78L705.2 416.83L705.8 416.74L706.4 416.79L707 416.81L707.6 416.79L708.2 416.83L708.8 416.82L709.4 416.83L709.4 417.26L708.8 417.24L708.2 417.18L707.6 417.24L707 417.25L706.4 417.17L705.8 417.18L705.2 417.19L704.6 417.17L704 417.22L703.4 417.26L702.8 417.22L702.2 417.18L701.6 417.18L701 417.17L700.4 417.26L699.8 417.26L699.2 417.21L698.6 417.22L698 417.2L697.4 417.26L696.8 417.4L696.2 417.78L695.6 419.55L695 419.45L694.4 419.06L693.8 419.64L693.2 419.93L692.6 421.87L692 421.88L691.4 421.62L690.8 423.1L690.2 424.33L689.6 423.33L689 421.34L688.4 424.33L687.8 421.88L687.2 421.94L686.6 426.78L686 423.86L685.4 426.44L684.8 422.05L684.2 422.04L683.6 421.97L683 426.62L682.4 423.08L681.8 427.5L681.2 422.71L680.6 421.9L680 427.91L679.4 427.73L678.8 423.82L678.2 422.21L677.6 424.45L677 423.57L676.4 423.91L675.8 423.97L675.2 422.23L674.6 424.75L674 424.46L673.4 422.8L672.8 422.27L672.2 426.55L671.6 422.72L671 425.01L670.4 422.31L669.8 427.77L669.2 424.48L668.6 423.88L668 422.26L667.4 424.61L666.8 422.35L666.2 427.94L665.6 422.97L665 422.5L664.4 422.5L663.8 424.45L663.2 422.37L662.6 423.72L662 425.2L661.4 422.82L660.8 424.24L660.2 422.03L659.6 422.79L659 421.7L658.4 427.33L657.8 422.03L657.2 426.64L656.6 422.12L656 422.12L655.4 424.72L654.8 425.4L654.2 421.9L653.6 421.37L653 427.07L652.4 422.64L651.8 425.78L651.2 422.58L650.6 421.77L650 422.09L649.4 421.28L648.8 423.36L648.2 421.24L647.6 423.01L647 421.33L646.4 423.42L645.8 421.99L645.2 421.52L644.6 421.67L644 421.46L643.4 426.48L642.8 425.78L642.2 426.06L641.6 422.58L641 422.19L640.4 426.23L639.8 422.17L639.2 423.98L638.6 423.11L638 424.75L637.4 424.93L636.8 422.13L636.2 423.01L635.6 421.97L635 422.28L634.4 423.94L633.8 427.22L633.2 424.44L632.6 423.24L632 422.54L631.4 422.37L630.8 424.79L630.2 423.17L629.6 422.34L629 427.86L628.4 422.44L627.8 428.13L627.2 423.34L626.6 424.59L626 426.25L625.4 422.35L624.8 422.29L624.2 424.93L623.6 426.63L623 425.49L622.4 422.4L621.8 426.72L621.2 423.8L620.6 423.34L620 422.07L619.4 423.44L618.8 422.08L618.2 422L617.6 424.93L617 423.54L616.4 423.38L615.8 425.08L615.2 422.96L614.6 425.4L614 421.8L613.4 426.43L612.8 421.68L612.2 422.36L611.6 421.59L611 421.43L610.4 427.13L609.8 426.61L609.2 424.43L608.6 421.58L608 421.32L607.4 421.4L606.8 426.12L606.2 422.06L605.6 422.82L605 421.32L604.4 422.2L603.8 421.56L603.2 426.03L602.6 422.04L602 425.76L601.4 423.93L600.8 422.6L600.2 421.74L599.6 421.5L599 427.24L598.4 425.65L597.8 422.6L597.2 422.7L596.6 421.64L596 422.46L595.4 425.18L594.8 422.13L594.2 421.72L593.6 427.67L593 422.98L592.4 422.78L591.8 425.57L591.2 425.31L590.6 422.55L590 427.03L589.4 422.52L588.8 428.35L588.2 427.97L587.6 422.81L587 428.45L586.4 422.31L585.8 426.79L585.2 426.09L584.6 424.13L584 422.99L583.4 422.92L582.8 422.37L582.2 428.72L581.6 423.83L581 422.39L580.4 425.91L579.8 424.42L579.2 423.1L578.6 422.23L578 425.97L577.4 422.17L576.8 425.19L576.2 423.21L575.6 422.17L575 426.21L574.4 423.64L573.8 424.42L573.2 427.61L572.6 421.87L572 422.92L571.4 427.58L570.8 427.34L570.2 421.66L569.6 422.02L569 424.57L568.4 421.55L567.8 421.49L567.2 422.49L566.6 421.57L566 426.29L565.4 422.52L564.8 421.93L564.2 421.54L563.6 421.69L563 421.69L562.4 421.11L561.8 421.16L561.2 421.47L560.6 420.22L560 420.81L559.4 420.14L558.8 419.11L558.2 419.66L557.6 423.48L557 422.57L556.4 419.98L555.8 419.25L555.2 419.01L554.6 419.4L554 419.14L553.4 419.57L552.8 420.02L552.2 421.59L551.6 419.58L551 421.48L550.4 419.25L549.8 419.89L549.2 422.82L548.6 419.62L548 420.69L547.4 422.47L546.8 419.03L546.2 419.8L545.6 421.59L545 419.32L544.4 422.52L543.8 421.94L543.2 419.53L542.6 421.09L542 419.66L541.4 419.32L540.8 419.48L540.2 423.39L539.6 420.65L539 420.52L538.4 419.41L537.8 419.37L537.2 420.21L536.6 420.21L536 421.22L535.4 419.59L534.8 423.09L534.2 423.92L533.6 420.32L533 419.66L532.4 423.49L531.8 421.8L531.2 419.93L530.6 422.83L530 420.78L529.4 419.93L528.8 419.71L528.2 423.03L527.6 420.68L527 419.92L526.4 422.14L525.8 419.88L525.2 423.54L524.6 420.76L524 419.85L523.4 419.9L522.8 420.97L522.2 421.02L521.6 420.47L521 420.87L520.4 420.28L519.8 420.02L519.2 422.51L518.6 419.92L518 420.55L517.4 420.42L516.8 419.83L516.2 420.35L515.6 419.75L515 420.62L514.4 423.76L513.8 420.4L513.2 420.37L512.6 420.11L512 419.61L511.4 419.58L510.8 419.51L510.2 421.91L509.6 421.83L509 419.54L508.4 419.45L507.8 419.51L507.2 420.51L506.6 422.46L506 419.25L505.4 422.52L504.8 421.59L504.2 419.55L503.6 423.25L503 419.45L502.4 419.26L501.8 419.6L501.2 419.37L500.6 422.14L500 419.07L499.4 422L498.8 419.29L498.2 419.87L497.6 419.07L497 422.95L496.4 418.99L495.8 419.11L495.2 419.37L494.6 419.23L494 419.36L493.4 419.16L492.8 419.67L492.2 419.5L491.6 421.84L491 423.04L490.4 420.05L489.8 419.8L489.2 419.83L488.6 419.85L488 420.15L487.4 419.11L486.8 419.17L486.2 419.86L485.6 420.36L485 421.6L484.4 419.29L483.8 420.33L483.2 420.09L482.6 419.77L482 419.32L481.4 419.78L480.8 423.79L480.2 421.7L479.6 420.62L479 420.48L478.4 421.36L477.8 419.81L477.2 419.55L476.6 421.37L476 419.62L475.4 420.08L474.8 423.36L474.2 419.66L473.6 421.46L473 420.32L472.4 420.23L471.8 424.45L471.2 421.81L470.6 423L470 422.55L469.4 424.52L468.8 420.23L468.2 419.78L467.6 419.82L467 419.82L466.4 419.87L465.8 424.26L465.2 420.45L464.6 419.79L464 424.51L463.4 420.74L462.8 424.5L462.2 420.9L461.6 420.25L461 423.71L460.4 419.84L459.8 420.62L459.2 419.97L458.6 423.01L458 419.87L457.4 419.69L456.8 421.97L456.2 422.17L455.6 420.18L455 420.13L454.4 419.48L453.8 419.46L453.2 420.03L452.6 419.98L452 419.61L451.4 420.24L450.8 419.31L450.2 419.63L449.6 423.15L449 419.27L448.4 419.35L447.8 419.79L447.2 421.93L446.6 421.82L446 423.19L445.4 420.93L444.8 419.14L444.2 419.71L443.6 419.59L443 421.56L442.4 419.04L441.8 419.16L441.2 419.75L440.6 419.05L440 419.28L439.4 422.54L438.8 420.85L438.2 420.37L437.6 420.46L437 420.89L436.4 420.65L435.8 424.6L435.2 421.04L434.6 421.44L434 422.73L433.4 421.94L432.8 420.45L432.2 420.47L431.6 422.49L431 422.49L430.4 421.75L429.8 424.05L429.2 421.46L428.6 421.65L428 422.48L427.4 425.36L426.8 421.35L426.2 425.36L425.6 423.65L425 421.63L424.4 422.65L423.8 427L423.2 423.14L422.6 423.22L422 422.47L421.4 421.61L420.8 421.52L420.2 426.83L419.6 420.35L419 423.47L418.4 420.55L417.8 420.55L417.2 423.86L416.6 420.21L416 424.3L415.4 419.4L414.8 419.27L414.2 419.1L413.6 422.7L413 418.84L412.4 418.78L411.8 418.66L411.2 418.89L410.6 418.54L410 418.62L409.4 418.06L408.8 418.43L408.2 421.41L407.6 417.83L407 417.82L406.4 418.11L405.8 417.77L405.2 418.03L404.6 417.98L404 417.91L403.4 419.55L402.8 419.07L402.2 418L401.6 417.77L401 417.8L400.4 417.79L399.8 418.42L399.2 417.76L398.6 418.99L398 417.82L397.4 417.86L396.8 417.95L396.2 417.81L395.6 418.07L395 420.1L394.4 417.21L393.8 417.2L393.2 417.18L392.6 417.18L392 417.27L391.4 417.17L390.8 417.21L390.2 417.19L389.6 417.21L389 417.19L388.4 417.17L387.8 417.25L387.2 417.18L386.6 417.21L386 417.19L385.4 417.18L384.8 417.19L384.2 417.24L383.6 417.17L383 417.25L382.4 417.18L381.8 417.17L381.2 417.24L380.6 417.2L380 417.18L379.4 417.22L378.8 417.2L378.2 417.24L377.6 417.17L377 417.21L376.4 417.19L375.8 417.18L375.2 417.26L374.6 417.24L374 417.17L373.4 417.17L372.8 417.26L372.2 417.19L371.6 417.24L371 417.23L370.4 417.23L369.8 417.25L369.2 417.2L368.6 417.21L368 417.19L367.4 417.18L366.8 417.21L366.2 417.19L365.6 417.17L365 417.18L364.4 417.2L363.8 417.18L363.2 417.24L362.6 417.22L362 417.18L361.4 417.22L360.8 417.25L360.2 417.17L359.6 417.17L359 417.2L358.4 417.21L357.8 417.2L357.2 417.18L356.6 417.17L356 417.25L355.4 417.2L354.8 417.18L354.2 417.19L353.6 417.2L353 417.21L352.4 417.22L351.8 417.19L351.2 417.18L350.6 417.25L350 417.18L349.4 417.2L348.8 417.21L348.2 417.21L347.6 417.17L347 417.21L346.4 417.27L345.8 417.25L345.2 417.19L344.6 417.17L344 417.19Z"/><path d="M328 497.42L328.6 497.4L329.2 497.34L329.8 497.38L330.4 497.36L331 497.42L331.6 497.42L332.2 497.41L332.8 497.34L333.4 497.33L334 497.39L334.6 497.38L335.2 497.41L335.8 497.42L336.4 497.42L337 497.39L337.6 497.42L338.2 497.39L338.8 497.41L339.4 497.43L340 497.41L340.6 497.37L341.2 497.36L341.8 497.43L342.4 497.41L343 497.37L343.6 497.38L344.2 497.41L344.8 497.34L345.4 497.42L346 497.43L346.6 497.43L347.2 497.41L347.8 497.4L348.4 497.42L349 497.42L349.6 497.35L350.2 497.41L350.8 497.43L351.4 497.36L352 497.42L352.6 497.43L353.2 497.42L353.8 497.37L354.4 497.4L355 497.38L355.6 497.38L356.2 497.35L356.8 497.42L357.4 497.42L358 497.38L358.6 497.42L359.2 497.38L359.8 497.41L360.4 497.41L361 497.43L361.6 497.33L362.2 497.43L362.8 497.4L363.4 497.38L364 497.36L364.6 497.34L365.2 497.4L365.8 497.4L366.4 497.38L367 497.39L367.6 497.43L368.2 497.36L368.8 497.42L369.4 497.39L370 497.41L370.6 497.41L371.2 497.42L371.8 497.41L372.4 497.43L373 497.35L373.6 497.42L374.2 497.38L374.8 497.41L375.4 497.43L376 497.41L376.6 497.33L377.2 497.35L377.8 497.35L378.4 497.34L379 497.34L379.6 497.42L380.2 497.4L380.8 497.41L381.4 497.39L382 497.42L382.6 497.4L383.2 497.38L383.8 497.4L384.4 496.68L385 496.88L385.6 496.87L386.2 494.96L386.8 496.87L387.4 496.89L388 496.73L388.6 496.85L389.2 496.73L389.8 496.9L390.4 496.85L391 496.6L391.6 496.84L392.2 496.87L392.8 496.63L393.4 496.85L394 496.43L394.6 496.85L395.2 496.86L395.8 495.82L396.4 496.42L397 496.56L397.6 495.04L398.2 496.14L398.8 493.21L399.4 495.92L400 493.36L400.6 494.89L401.2 491.54L401.8 493.93L402.4 495.04L403 494.49L403.6 493.16L404.2 489.1L404.8 493.9L405.4 489.85L406 493.91L406.6 493.79L407.2 494.07L407.8 493.8L408.4 492.79L409 492.35L409.6 489.89L410.2 490L410.8 490.44L411.4 494.09L412 493.39L412.6 492.8L413.2 493.73L413.8 488.9L414.4 493.1L415 493.6L415.6 492.8L416.2 494.94L416.8 495L417.4 494.89L418 493.95L418.6 494.93L419.2 494.98L419.8 491.21L420.4 490.37L421 494.16L421.6 495.06L422.2 491.16L422.8 492.58L423.4 494.64L424 494.94L424.6 492.96L425.2 495L425.8 491.16L426.4 491.39L427 494.63L427.6 493.79L428.2 491.23L428.8 495.45L429.4 495.17L430 494.19L430.6 491.71L431.2 495L431.8 492.26L432.4 495.61L433 494.24L433.6 495.43L434.2 495.56L434.8 492.25L435.4 492.08L436 494.87L436.6 495.5L437.2 493.33L437.8 495.62L438.4 495.47L439 495.79L439.6 495.8L440.2 495.58L440.8 495.27L441.4 495.36L442 492.45L442.6 495.68L443.2 492.23L443.8 495.72L444.4 495.72L445 491.32L445.6 495.26L446.2 493.03L446.8 495.61L447.4 495.34L448 495.55L448.6 494.65L449.2 493.33L449.8 492.7L450.4 493.6L451 495.44L451.6 494.59L452.2 495.2L452.8 494.78L453.4 492.03L454 494.79L454.6 495.22L455.2 494.59L455.8 495.13L456.4 494.02L457 495.12L457.6 494.73L458.2 494.61L458.8 492.02L459.4 490.34L460 494.81L460.6 494.45L461.2 494.98L461.8 493.62L462.4 494.28L463 494.9L463.6 494.8L464.2 491.53L464.8 494.97L465.4 494.83L466 494.99L466.6 494.8L467.2 495.01L467.8 490.2L468.4 490.64L469 494.12L469.6 492.21L470.2 494.62L470.8 493.92L471.4 492.52L472 493.96L472.6 494.35L473.2 495.05L473.8 495.13L474.4 494.93L475 495.01L475.6 495.26L476.2 495.12L476.8 493.01L477.4 495.2L478 493L478.6 495.45L479.2 494.39L479.8 492.17L480.4 495.38L481 492.34L481.6 491.43L482.2 495.54L482.8 495.58L483.4 495.26L484 495.35L484.6 495.71L485.2 494.76L485.8 495.45L486.4 494.98L487 495.13L487.6 495.5L488.2 494.88L488.8 495.65L489.4 493.83L490 494.93L490.6 493.63L491.2 495.71L491.8 495.54L492.4 495.74L493 492.1L493.6 495.36L494.2 495.04L494.8 495.25L495.4 495.41L496 495.63L496.6 493.59L497.2 494.15L497.8 491.91L498.4 495.59L499 493.23L499.6 494.97L500.2 493.34L500.8 491.31L501.4 495.19L502 495.19L502.6 495.39L503.2 494.16L503.8 491.85L504.4 494.23L505 495.17L505.6 494.19L506.2 495.2L506.8 490.9L507.4 491.19L508 494.92L508.6 492.39L509.2 494.64L509.8 491.84L510.4 494.78L511 494.8L511.6 492.45L512.2 494.73L512.8 494.97L513.4 494.92L514 491.2L514.6 494.78L515.2 494.98L515.8 494.65L516.4 492.83L517 494.71L517.6 494.5L518.2 494.97L518.8 494.45L519.4 495.04L520 491.18L520.6 494.91L521.2 493.76L521.8 495.12L522.4 495.01L523 491.12L523.6 495.19L524.2 494.69L524.8 495.19L525.4 495.23L526 491.47L526.6 492.26L527.2 494.28L527.8 495.01L528.4 495.43L529 494.5L529.6 493.53L530.2 492.33L530.8 495.44L531.4 495.44L532 491.42L532.6 495.62L533.2 494.85L533.8 490.96L534.4 492.98L535 494.39L535.6 494.22L536.2 492.92L536.8 493.56L537.4 492.01L538 493.51L538.6 492.52L539.2 491.92L539.8 491.59L540.4 491.33L541 492.25L541.6 491.88L542.2 490.79L542.8 492.2L543.4 490.45L544 487.24L544.6 493.14L545.2 492.49L545.8 487.47L546.4 488.58L547 492.9L547.6 493.47L548.2 493.09L548.8 493.03L549.4 489.92L550 493.2L550.6 492.52L551.2 490.38L551.8 490.89L552.4 492.7L553 493.23L553.6 493.2L554.2 493.89L554.8 493.3L555.4 491.74L556 493.63L556.6 493.83L557.2 493.77L557.8 489.4L558.4 489.03L559 492.38L559.6 491.46L560.2 493.82L560.8 492.12L561.4 493.38L562 493.68L562.6 493.44L563.2 493.38L563.8 492.75L564.4 490.7L565 493.4L565.6 492.8L566.2 493.31L566.8 490.07L567.4 492.89L568 492.83L568.6 491.09L569.2 490.04L569.8 492.76L570.4 492.94L571 492.26L571.6 487.47L572.2 489.28L572.8 491.32L573.4 489.62L574 491.16L574.6 486.81L575.2 492.87L575.8 487.42L576.4 489.25L577 492.93L577.6 488.09L578.2 492.31L578.8 492.86L579.4 491.71L580 488.38L580.6 493.08L581.2 493.13L581.8 493.15L582.4 492.87L583 492.59L583.6 491.32L584.2 492.75L584.8 493.44L585.4 492.86L586 492.16L586.6 492.56L587.2 493.2L587.8 493.14L588.4 492.73L589 488.55L589.6 488.33L590.2 493.28L590.8 493.25L591.4 492.98L592 490.96L592.6 493.89L593.2 492.31L593.8 493.79L594.4 493.76L595 493.67L595.6 493.28L596.2 493.9L596.8 492.4L597.4 492.45L598 489.67L598.6 488.46L599.2 493.08L599.8 493.44L600.4 490.17L601 491.47L601.6 489.4L602.2 492.48L602.8 492.37L603.4 493.22L604 493.27L604.6 489.86L605.2 489.5L605.8 492.34L606.4 491.13L607 488.64L607.6 489.15L608.2 490.27L608.8 492.83L609.4 490.75L610 492.95L610.6 492.06L611.2 487.8L611.8 492.85L612.4 492.36L613 492.17L613.6 491.53L614.2 487.26L614.8 492.09L615.4 492.87L616 492.98L616.6 491.36L617.2 491.62L617.8 492.95L618.4 489.01L619 492.91L619.6 492.03L620.2 492.33L620.8 488.73L621.4 492.85L622 493.01L622.6 491.64L623.2 493.41L623.8 491.36L624.4 490.12L625 493.66L625.6 492.86L626.2 489.72L626.8 493.71L627.4 493.56L628 493.86L628.6 489.64L629.2 493.89L629.8 493.57L630.4 492.24L631 492.55L631.6 493.8L632.2 493.7L632.8 492.59L633.4 492.59L634 493.88L634.6 490.59L635.2 493.49L635.8 491.78L636.4 490.44L637 491.66L637.6 493.17L638.2 493.4L638.8 491.86L639.4 492.82L640 488.66L640.6 492.58L641.2 492.51L641.8 493.17L642.4 489.04L643 492.54L643.6 492.21L644.2 493.15L644.8 490.41L645.4 493.07L646 492.86L646.6 487.45L647.2 487.19L647.8 492.84L648.4 492.12L649 491.74L649.6 492.89L650.2 490.78L650.8 492.8L651.4 488.21L652 487.47L652.6 492.74L653.2 488.42L653.8 492.93L654.4 488.32L655 493.05L655.6 488.45L656.2 493.28L656.8 492.89L657.4 492.89L657.4 502.81L656.8 503.24L656.2 503.67L655.6 503.59L655 502.17L654.4 502.2L653.8 502.23L653.2 505.78L652.6 503.31L652 505.48L651.4 504.56L650.8 504.21L650.2 506.23L649.6 502.3L649 503.31L648.4 502.31L647.8 506.68L647.2 502.23L646.6 502.47L646 502.32L645.4 504.8L644.8 503.17L644.2 505.04L643.6 502.84L643 502.51L642.4 505.46L641.8 501.91L641.2 501.92L640.6 501.85L640 501.73L639.4 504.35L638.8 501.81L638.2 501.92L637.6 502.57L637 507.12L636.4 502.61L635.8 502.64L635.2 502.58L634.6 506.85L634 502.75L633.4 503.48L632.8 505.88L632.2 501.27L631.6 504.55L631 502.17L630.4 503.53L629.8 501.66L629.2 502.53L628.6 501.31L628 501.47L627.4 506.23L626.8 502.94L626.2 501.84L625.6 504L625 501.73L624.4 503.22L623.8 501.97L623.2 506.41L622.6 503.98L622 501.86L621.4 502.35L620.8 502.21L620.2 507.01L619.6 504.9L619 505.99L618.4 502.1L617.8 505.02L617.2 506.29L616.6 504.89L616 505.79L615.4 502.68L614.8 502.32L614.2 506.85L613.6 503.45L613 502.49L612.4 503.93L611.8 502.31L611.2 504.47L610.6 502.41L610 506.22L609.4 507.73L608.8 502.99L608.2 504.47L607.6 504.32L607 503.77L606.4 507.93L605.8 502.03L605.2 501.98L604.6 502.46L604 503.58L603.4 501.8L602.8 502.91L602.2 506.59L601.6 501.81L601 504.68L600.4 505.29L599.8 503.54L599.2 501.87L598.6 501.84L598 501.41L597.4 501.63L596.8 501.36L596.2 502.94L595.6 502.59L595 502.84L594.4 502.34L593.8 503.11L593.2 502.38L592.6 505.2L592 501.28L591.4 502.13L590.8 503.97L590.2 501.98L589.6 506.34L589 501.69L588.4 501.79L587.8 502.68L587.2 502.97L586.6 506.75L586 506.59L585.4 501.71L584.8 503.48L584.2 505.11L583.6 503.59L583 505.53L582.4 501.98L581.8 505.12L581.2 503.19L580.6 502.29L580 502.37L579.4 507.66L578.8 502.86L578.2 505.52L577.6 502.4L577 506.48L576.4 508.37L575.8 502.32L575.2 503.4L574.6 507.93L574 508.38L573.4 506.82L572.8 503.87L572.2 502.4L571.6 502.39L571 502.19L570.4 502.24L569.8 503.34L569.2 502.44L568.6 502.19L568 503.44L567.4 503.32L566.8 501.98L566.2 502L565.6 506.9L565 501.95L564.4 501.95L563.8 501.66L563.2 503.54L562.6 506.29L562 501.6L561.4 501.58L560.8 505.64L560.2 502.74L559.6 501.78L559 501.34L558.4 501.6L557.8 501.39L557.2 506.45L556.6 501.26L556 501.66L555.4 503.16L554.8 501.53L554.2 501.65L553.6 501.79L553 503.06L552.4 502.22L551.8 506.06L551.2 502.68L550.6 505.6L550 503.16L549.4 506.99L548.8 503.99L548.2 502.58L547.6 504.9L547 501.79L546.4 503.04L545.8 507.58L545.2 501.94L544.6 502L544 502L543.4 503.67L542.8 502.09L542.2 502.14L541.6 502.62L541 507.81L540.4 502.79L539.8 502.19L539.2 502.25L538.6 506.98L538 503.27L537.4 501.57L536.8 503.19L536.2 501.57L535.6 503.68L535 505.36L534.4 503.32L533.8 501.14L533.2 500.69L532.6 503.11L532 499.72L531.4 500.57L530.8 499.97L530.2 499.72L529.6 502.2L529 499.74L528.4 502.51L527.8 499.88L527.2 499.93L526.6 504.2L526 503.79L525.4 502.47L524.8 500.32L524.2 500.24L523.6 500.1L523 503.06L522.4 500.12L521.8 500.49L521.2 504.55L520.6 500.93L520 504.09L519.4 500.43L518.8 504.54L518.2 501.53L517.6 500.8L517 500.93L516.4 504.51L515.8 500.21L515.2 501.89L514.6 501.42L514 500.21L513.4 501.07L512.8 500.36L512.2 501.88L511.6 500.43L511 500.2L510.4 501.49L509.8 500.14L509.2 501.19L508.6 501.39L508 500.11L507.4 500.95L506.8 501.31L506.2 501.09L505.6 501.06L505 500.18L504.4 500.44L503.8 500.04L503.2 500.12L502.6 502.56L502 501.92L501.4 499.91L500.8 499.83L500.2 499.85L499.6 500.35L499 503.49L498.4 499.67L497.8 503L497.2 500.26L496.6 499.62L496 503.27L495.4 499.5L494.8 501.42L494.2 500.32L493.6 500.14L493 500.11L492.4 500.48L491.8 499.43L491.2 503.18L490.6 500.91L490 499.42L489.4 500.27L488.8 502.36L488.2 502.22L487.6 499.79L487 502.9L486.4 502.72L485.8 501.63L485.2 499.87L484.6 499.71L484 500.39L483.4 499.65L482.8 503.29L482.2 500.5L481.6 500.24L481 500.03L480.4 503.36L479.8 502.76L479.2 500.54L478.6 499.96L478 501.38L477.4 500.32L476.8 500.27L476.2 501.01L475.6 502.88L475 504.6L474.4 500.1L473.8 501.85L473.2 500.03L472.6 500.31L472 500.63L471.4 500.27L470.8 501.02L470.2 500.97L469.6 504.04L469 500.84L468.4 504.1L467.8 500.27L467.2 500.21L466.6 502.59L466 504.66L465.4 503.08L464.8 504.62L464.2 502.88L463.6 501.12L463 501.09L462.4 501.45L461.8 504.22L461.2 501.44L460.6 500.38L460 500.33L459.4 500.12L458.8 500.7L458.2 500.12L457.6 502.37L457 501.36L456.4 500.09L455.8 501.23L455.2 500.12L454.6 499.93L454 499.89L453.4 502.11L452.8 502.82L452.2 501.3L451.6 504.24L451 501.8L450.4 499.71L449.8 501.4L449.2 500.61L448.6 499.72L448 502.27L447.4 499.76L446.8 501.2L446.2 499.53L445.6 500.23L445 499.68L444.4 499.74L443.8 499.61L443.2 500.32L442.6 502.98L442 503.16L441.4 499.41L440.8 499.44L440.2 499.42L439.6 499.79L439 499.54L438.4 499.46L437.8 499.85L437.2 499.65L436.6 499.63L436 503.75L435.4 499.5L434.8 499.59L434.2 501.36L433.6 499.58L433 500.97L432.4 503.56L431.8 499.84L431.2 499.67L430.6 499.96L430 500.65L429.4 499.92L428.8 502.59L428.2 499.78L427.6 500.88L427 500.38L426.4 504.1L425.8 500.68L425.2 502.75L424.6 500.79L424 503.81L423.4 504.52L422.8 500.19L422.2 500.38L421.6 500.13L421 500.17L420.4 504.12L419.8 501.17L419.2 500.16L418.6 501.38L418 501.57L417.4 500.3L416.8 502.26L416.2 502.87L415.6 501.99L415 501.08L414.4 505.93L413.8 501.8L413.2 502.89L412.6 501.7L412 504.62L411.4 501.26L410.8 501.66L410.2 504.85L409.6 501.15L409 501.97L408.4 503.87L407.8 501.18L407.2 501.92L406.6 502.84L406 501.29L405.4 501.34L404.8 503.41L404.2 502.5L403.6 500.55L403 500.45L402.4 500.16L401.8 501.38L401.2 499.82L400.6 500.42L400 502.67L399.4 502.91L398.8 499.72L398.2 503.07L397.6 498.93L397 498.59L396.4 498.44L395.8 498.44L395.2 498.77L394.6 498.3L394 498.43L393.4 498.3L392.8 501.33L392.2 498.62L391.6 499.24L391 498.57L390.4 498.32L389.8 498.54L389.2 499.85L388.6 498.3L388 498.91L387.4 498.32L386.8 498.35L386.2 498.5L385.6 498.36L385 498.62L384.4 498.49L383.8 497.78L383.2 497.78L382.6 497.79L382 497.8L381.4 497.78L380.8 497.8L380.2 497.78L379.6 497.8L379 497.8L378.4 497.81L377.8 497.81L377.2 497.83L376.6 497.78L376 497.85L375.4 497.77L374.8 497.82L374.2 497.78L373.6 497.85L373 497.81L372.4 497.82L371.8 497.77L371.2 497.87L370.6 497.82L370 497.82L369.4 497.82L368.8 497.77L368.2 497.78L367.6 497.82L367 497.87L366.4 497.82L365.8 497.78L365.2 497.78L364.6 497.84L364 497.78L363.4 497.8L362.8 497.78L362.2 497.8L361.6 497.86L361 497.8L360.4 497.78L359.8 497.82L359.2 497.78L358.6 497.78L358 497.87L357.4 497.77L356.8 497.79L356.2 497.77L355.6 497.77L355 497.79L354.4 497.78L353.8 497.82L353.2 497.78L352.6 497.8L352 497.81L351.4 497.81L350.8 497.78L350.2 497.78L349.6 497.82L349 497.78L348.4 497.78L347.8 497.86L347.2 497.78L346.6 497.81L346 497.78L345.4 497.77L344.8 497.81L344.2 497.8L343.6 497.84L343 497.78L342.4 497.78L341.8 497.8L341.2 497.78L340.6 497.78L340 497.78L339.4 497.77L338.8 497.8L338.2 497.8L337.6 497.8L337 497.84L336.4 497.78L335.8 497.78L335.2 497.85L334.6 497.8L334 497.78L333.4 497.81L332.8 497.87L332.2 497.82L331.6 497.78L331 497.83L330.4 497.87L329.8 497.77L329.2 497.79L328.6 497.78L328 497.85Z"/><path d="M328 537.94L328.6 538.02L329.2 538.01L329.8 537.97L330.4 537.98L331 538.01L331.6 537.98L332.2 537.93L332.8 538.02L333.4 538L334 538.01L334.6 538.03L335.2 538L335.8 538.02L336.4 538.03L337 538.01L337.6 538L338.2 538.01L338.8 538.03L339.4 537.94L340 538.01L340.6 537.97L341.2 537.97L341.8 538.02L342.4 538.01L343 538.01L343.6 538.01L344.2 537.94L344.8 537.99L345.4 538.02L346 537.94L346.6 537.99L347.2 537.97L347.8 537.99L348.4 537.95L349 538.02L349.6 538.02L350.2 538L350.8 538.02L351.4 537.97L352 538.01L352.6 537.98L353.2 538.02L353.8 538.01L354.4 538L355 538L355.6 538.02L356.2 538.03L356.8 537.95L357.4 537.95L358 538L358.6 538.02L359.2 537.94L359.8 538L360.4 537.95L361 537.99L361.6 537.95L362.2 538.02L362.8 538L363.4 538.01L364 538.02L364.6 538L365.2 537.96L365.8 537.94L366.4 538.03L367 538.01L367.6 537.97L368.2 538.02L368.8 537.94L369.4 538.01L370 538.01L370.6 537.97L371.2 538.02L371.8 538.03L372.4 538.03L373 538.01L373.6 538.02L374.2 538.02L374.8 538.03L375.4 538.01L376 538.01L376.6 538.03L377.2 538L377.8 537.99L378.4 538.02L379 537.98L379.6 538.02L380.2 538.02L380.8 537.94L381.4 537.95L382 537.97L382.6 538L383.2 537.99L383.8 538.02L384.4 537.36L385 534.15L385.6 537.2L386.2 537.36L386.8 536.24L387.4 537.39L388 537.48L388.6 537.43L389.2 537.49L389.8 537.31L390.4 537.37L391 537.47L391.6 537.48L392.2 537.48L392.8 537.48L393.4 537.33L394 537.49L394.6 536.22L395.2 537.38L395.8 535.52L396.4 537.28L397 537.07L397.6 537.04L398.2 534.55L398.8 532.73L399.4 536.49L400 533.68L400.6 536.04L401.2 536L401.8 532.47L402.4 531.92L403 530.92L403.6 531.21L404.2 534.16L404.8 533.88L405.4 531.03L406 534.71L406.6 534.54L407.2 533.56L407.8 534.27L408.4 534.69L409 534.22L409.6 534.13L410.2 529.77L410.8 533.91L411.4 534.15L412 534.47L412.6 534.26L413.2 533.82L413.8 533.86L414.4 532.91L415 534.71L415.6 534.47L416.2 534.55L416.8 535.39L417.4 534.54L418 533.86L418.6 535.45L419.2 535.65L419.8 534.36L420.4 534.98L421 533.1L421.6 530.91L422.2 535.61L422.8 535.58L423.4 535.55L424 532.73L424.6 535.62L425.2 533.66L425.8 535.21L426.4 535.62L427 535.61L427.6 535.85L428.2 532.5L428.8 535.49L429.4 535.51L430 532.67L430.6 534.34L431.2 535.82L431.8 536.01L432.4 536.23L433 535.83L433.6 536.14L434.2 536.29L434.8 535.37L435.4 536.34L436 535.97L436.6 534.88L437.2 533.35L437.8 536.35L438.4 536.39L439 536.36L439.6 535.07L440.2 536.16L440.8 536.25L441.4 536.39L442 536.31L442.6 536.23L443.2 535.82L443.8 536.33L444.4 531.99L445 535.56L445.6 533.21L446.2 536.25L446.8 535.29L447.4 535.37L448 536.13L448.6 536.05L449.2 535.43L449.8 535.63L450.4 535.85L451 536.01L451.6 535.83L452.2 535.69L452.8 535.39L453.4 535.22L454 535.55L454.6 535.05L455.2 535.51L455.8 534.84L456.4 535.14L457 532.5L457.6 533.79L458.2 532.54L458.8 532.21L459.4 535.1L460 534.89L460.6 535.6L461.2 532.54L461.8 535.18L462.4 535.41L463 533.01L463.6 534.2L464.2 535.53L464.8 535.59L465.4 535.42L466 534.57L466.6 532.98L467.2 535.07L467.8 534.64L468.4 535.06L469 533.12L469.6 535.66L470.2 535.52L470.8 532.22L471.4 535.64L472 535L472.6 535.23L473.2 535.19L473.8 535.81L474.4 535.18L475 535.79L475.6 534.87L476.2 535.52L476.8 533.76L477.4 535.12L478 533.23L478.6 533.92L479.2 536.08L479.8 536.03L480.4 535.11L481 536.09L481.6 535.68L482.2 535.92L482.8 535.88L483.4 534.32L484 536.29L484.6 536.29L485.2 536.03L485.8 535.37L486.4 536.18L487 535.89L487.6 533.28L488.2 533.7L488.8 536.24L489.4 534.72L490 535.56L490.6 535.66L491.2 536.39L491.8 534.91L492.4 532.6L493 536.37L493.6 535.13L494.2 536.3L494.8 535.9L495.4 532.25L496 532.17L496.6 535.99L497.2 535.95L497.8 535.93L498.4 535.83L499 535.65L499.6 533.88L500.2 535.84L500.8 535.93L501.4 534.97L502 535.91L502.6 535.85L503.2 533.4L503.8 535.79L504.4 535.69L505 535.88L505.6 535.74L506.2 533.46L506.8 534.52L507.4 535.02L508 533.66L508.6 534.87L509.2 531.55L509.8 533.87L510.4 533.22L511 534.95L511.6 535.54L512.2 535.56L512.8 535.61L513.4 535.21L514 535.21L514.6 535.34L515.2 534.79L515.8 535.57L516.4 535.38L517 532.14L517.6 534.47L518.2 534.81L518.8 531.73L519.4 535.02L520 531.54L520.6 535.28L521.2 534.66L521.8 535.7L522.4 532.88L523 534.59L523.6 535.22L524.2 532.64L524.8 535.85L525.4 535.87L526 532.69L526.6 535.18L527.2 534.79L527.8 535.66L528.4 534.86L529 535.28L529.6 534.19L530.2 535.49L530.8 535.12L531.4 532.33L532 533.25L532.6 535.71L533.2 535.44L533.8 535.05L534.4 535.05L535 533.66L535.6 530.95L536.2 533.32L536.8 534.13L537.4 534.04L538 533.43L538.6 532.61L539.2 533.06L539.8 529.45L540.4 533.44L541 533.6L541.6 533.19L542.2 533.39L542.8 532.09L543.4 531.11L544 533.3L544.6 533.26L545.2 530.72L545.8 528.77L546.4 530.49L547 534.03L547.6 532.64L548.2 534.03L548.8 534.2L549.4 531.08L550 533.54L550.6 534.13L551.2 534.34L551.8 533.48L552.4 532.49L553 534.47L553.6 532.67L554.2 534.42L554.8 531.49L555.4 533.77L556 534.14L556.6 532.97L557.2 533.59L557.8 533.48L558.4 534.47L559 532.1L559.6 533.39L560.2 530.33L560.8 532.04L561.4 532.69L562 533.69L562.6 529.16L563.2 532.36L563.8 533.83L564.4 533.39L565 532.83L565.6 533.7L566.2 533.79L566.8 533.85L567.4 533.45L568 533.79L568.6 533.76L569.2 529.18L569.8 533.01L570.4 533.05L571 531.78L571.6 533.07L572.2 533.42L572.8 528.83L573.4 530.01L574 533.3L574.6 529.28L575.2 532.13L575.8 532.44L576.4 527.71L577 532.04L577.6 528.34L578.2 532.6L578.8 527.53L579.4 533.15L580 533.13L580.6 532.13L581.2 532.09L581.8 533.45L582.4 533.86L583 533.91L583.6 528.65L584.2 533.48L584.8 533.55L585.4 533.86L586 533.85L586.6 533.9L587.2 534.26L587.8 533.61L588.4 529.19L589 533.3L589.6 534.15L590.2 533.65L590.8 534.19L591.4 534.32L592 534.03L592.6 532.91L593.2 532.94L593.8 533.48L594.4 534.27L595 534.53L595.6 533.68L596.2 531.48L596.8 533.63L597.4 530.41L598 534.28L598.6 529.28L599.2 533.63L599.8 534.3L600.4 532.47L601 533.84L601.6 531.43L602.2 530.44L602.8 531.48L603.4 529.27L604 532.84L604.6 533.61L605.2 532.88L605.8 533.21L606.4 533.35L607 529.88L607.6 529.05L608.2 528.76L608.8 533.48L609.4 531.54L610 533.01L610.6 527.92L611.2 532.9L611.8 531.85L612.4 532.58L613 528.86L613.6 533.47L614.2 531.9L614.8 533.27L615.4 531.84L616 528.12L616.6 533.55L617.2 532.27L617.8 530.94L618.4 533.01L619 530.66L619.6 528.75L620.2 533.62L620.8 532.56L621.4 532.05L622 533.42L622.6 533.98L623.2 533.85L623.8 528.59L624.4 528.84L625 533.5L625.6 532.24L626.2 534.06L626.8 534.4L627.4 529.34L628 532.42L628.6 533.73L629.2 534.51L629.8 533.22L630.4 534.51L631 533.71L631.6 534.03L632.2 533.49L632.8 531.63L633.4 534.49L634 533.12L634.6 533.89L635.2 531.85L635.8 534.33L636.4 532.28L637 533.86L637.6 534.28L638.2 530.32L638.8 529.71L639.4 534.06L640 534.02L640.6 533.91L641.2 531.17L641.8 533.46L642.4 530.29L643 533.19L643.6 530.76L644.2 530.95L644.8 533.3L645.4 533.33L646 533.55L646.6 528.55L647.2 528.82L647.8 532.08L648.4 532.26L649 533.36L649.6 533.25L650.2 531.47L650.8 532.61L651.4 530.18L652 532.68L652.6 529.69L653.2 531.71L653.8 532.44L654.4 531.26L655 533.46L655.6 533.67L656.2 533.77L656.8 533.7L657.4 532.16L657.4 542.34L656.8 544.7L656.2 542.59L655.6 544.68L655 543.02L654.4 543.18L653.8 544.74L653.2 542.89L652.6 546.14L652 543.87L651.4 545.8L650.8 544.58L650.2 544.48L649.6 545.26L649 548.7L648.4 543.69L647.8 548.18L647.2 544.63L646.6 545.32L646 546.63L645.4 544.09L644.8 546.47L644.2 544.64L643.6 543.39L643 543.92L642.4 546.11L641.8 545.23L641.2 542.83L640.6 546.41L640 542.81L639.4 543.13L638.8 544.13L638.2 546.94L637.6 542.4L637 543.51L636.4 542.93L635.8 547.29L635.2 543.64L634.6 543.92L634 543.34L633.4 542.72L632.8 542.47L632.2 542.51L631.6 543.64L631 545.65L630.4 544.58L629.8 543.21L629.2 542.79L628.6 543.43L628 545.58L627.4 542.58L626.8 544.56L626.2 543.06L625.6 542.75L625 542.3L624.4 547.19L623.8 542.52L623.2 544.41L622.6 542.37L622 544.94L621.4 544.31L620.8 547.44L620.2 547.28L619.6 543.1L619 542.65L618.4 547.09L617.8 545.95L617.2 546.55L616.6 544.64L616 543.68L615.4 547.28L614.8 543.6L614.2 543.32L613.6 542.92L613 543.24L612.4 542.9L611.8 546.5L611.2 542.89L610.6 543.27L610 542.95L609.4 544.77L608.8 542.93L608.2 543.36L607.6 543.3L607 543.09L606.4 543.77L605.8 542.98L605.2 543.37L604.6 544.32L604 545.23L603.4 548L602.8 543.37L602.2 542.36L601.6 546.41L601 547.4L600.4 546.57L599.8 544.11L599.2 543.05L598.6 542.31L598 543.12L597.4 542.63L596.8 544.11L596.2 542.4L595.6 542.06L595 543.84L594.4 542.09L593.8 543.25L593.2 542.16L592.6 542.42L592 544.05L591.4 542.83L590.8 542.65L590.2 546.76L589.6 542.47L589 542.11L588.4 542.43L587.8 544.23L587.2 547.47L586.6 542.45L586 544.03L585.4 543.64L584.8 542.87L584.2 543.12L583.6 543L583 542.8L582.4 544.9L581.8 542.59L581.2 544.7L580.6 545.01L580 544.54L579.4 543L578.8 543.13L578.2 543.16L577.6 543.11L577 548.11L576.4 542.93L575.8 542.94L575.2 545.32L574.6 543.15L574 545.73L573.4 547.14L572.8 543.07L572.2 546.49L571.6 543.35L571 548.29L570.4 544.21L569.8 547.6L569.2 543.26L568.6 542.78L568 544.91L567.4 542.54L566.8 544.76L566.2 542.63L565.6 543.03L565 542.67L564.4 543.44L563.8 546.43L563.2 543.56L562.6 543.95L562 543.61L561.4 542.06L560.8 542.59L560.2 542.01L559.6 542.94L559 542.49L558.4 545.34L557.8 542.08L557.2 543.08L556.6 544.03L556 542.23L555.4 542.99L554.8 542.5L554.2 541.89L553.6 542.65L553 543.67L552.4 547.28L551.8 543.9L551.2 543.19L550.6 545.97L550 542.68L549.4 546.59L548.8 544.08L548.2 545.58L547.6 545.11L547 543.38L546.4 542.4L545.8 542.49L545.2 544.32L544.6 542.58L544 544.81L543.4 542.68L542.8 544.25L542.2 545.2L541.6 542.76L541 544.09L540.4 542.95L539.8 547.53L539.2 545.81L538.6 544.42L538 542.35L537.4 544.05L536.8 542.51L536.2 541.74L535.6 541.94L535 541.95L534.4 541.27L533.8 542.96L533.2 541.86L532.6 540.21L532 540.22L531.4 541.05L530.8 540.68L530.2 544.74L529.6 542.75L529 540.98L528.4 540.56L527.8 543.13L527.2 543.23L526.6 540.48L526 540.54L525.4 540.82L524.8 540.57L524.2 540.6L523.6 542.47L523 541.05L522.4 540.69L521.8 541.77L521.2 540.71L520.6 540.73L520 544.35L519.4 540.85L518.8 540.82L518.2 540.81L517.6 541.42L517 540.97L516.4 540.85L515.8 541.19L515.2 541.94L514.6 543.4L514 544.19L513.4 541.41L512.8 541.8L512.2 540.78L511.6 541.6L511 543.84L510.4 545.12L509.8 540.88L509.2 541.6L508.6 542.61L508 545.22L507.4 542.88L506.8 545.32L506.2 540.97L505.6 545.21L505 541.42L504.4 540.57L503.8 544.01L503.2 542.42L502.6 540.66L502 540.4L501.4 540.51L500.8 543.69L500.2 540.38L499.6 540.27L499 541.09L498.4 540.57L497.8 543.06L497.2 541.31L496.6 540.5L496 540.51L495.4 540.32L494.8 540.09L494.2 541.46L493.6 540.72L493 540.68L492.4 540.03L491.8 540.47L491.2 541.92L490.6 540.95L490 540.01L489.4 543.94L488.8 540.21L488.2 543.14L487.6 540.74L487 540.06L486.4 540.14L485.8 540.12L485.2 541.09L484.6 540.68L484 544.25L483.4 540.47L482.8 542.41L482.2 540.19L481.6 540.25L481 544.68L480.4 541.49L479.8 541.29L479.2 541.07L478.6 540.61L478 540.91L477.4 541L476.8 540.76L476.2 541.15L475.6 541.32L475 541.36L474.4 544.79L473.8 541.47L473.2 540.72L472.6 540.66L472 545.28L471.4 541.78L470.8 542.88L470.2 541.04L469.6 541.3L469 541.24L468.4 540.85L467.8 540.8L467.2 540.94L466.6 542.99L466 540.85L465.4 541.59L464.8 543.94L464.2 544.89L463.6 545.58L463 541.81L462.4 541.11L461.8 544.39L461.2 541.01L460.6 540.8L460 541.26L459.4 540.73L458.8 543.93L458.2 543.17L457.6 540.66L457 541.86L456.4 540.77L455.8 543.6L455.2 541.23L454.6 543.01L454 544.37L453.4 542.09L452.8 540.44L452.2 540.75L451.6 540.79L451 540.35L450.4 544.54L449.8 541.54L449.2 540.48L448.6 540.97L448 541.1L447.4 540.91L446.8 540.24L446.2 540.62L445.6 543.6L445 540.08L444.4 540.34L443.8 540.48L443.2 541.18L442.6 541.2L442 540.05L441.4 540.78L440.8 540.31L440.2 540.01L439.6 540.4L439 540.03L438.4 540.24L437.8 540.43L437.2 543.91L436.6 540.33L436 540.43L435.4 540.08L434.8 540.87L434.2 540.59L433.6 541.95L433 540.15L432.4 540.3L431.8 540.59L431.2 540.28L430.6 543.75L430 540.31L429.4 541.91L428.8 540.43L428.2 540.69L427.6 541.42L427 544.02L426.4 542.22L425.8 540.72L425.2 541.04L424.6 544.91L424 540.59L423.4 543.78L422.8 541.59L422.2 540.65L421.6 542.32L421 541.3L420.4 541.13L419.8 541.68L419.2 544.82L418.6 544.42L418 541.39L417.4 544.95L416.8 541.05L416.2 540.81L415.6 546.59L415 542.16L414.4 544.94L413.8 541.9L413.2 544.48L412.6 544.94L412 541.69L411.4 545.12L410.8 546.56L410.2 546.46L409.6 547.11L409 542.65L408.4 541.86L407.8 546.08L407.2 541.68L406.6 541.69L406 546.34L405.4 541.78L404.8 545.15L404.2 543.24L403.6 546.15L403 541.81L402.4 541.05L401.8 543.1L401.2 540.41L400.6 540.25L400 540.72L399.4 540.35L398.8 539.71L398.2 539.72L397.6 539.36L397 539.31L396.4 541.61L395.8 539L395.2 539.22L394.6 541.48L394 538.95L393.4 538.94L392.8 542.22L392.2 539.16L391.6 539.12L391 538.92L390.4 539.15L389.8 538.9L389.2 539.03L388.6 539.02L388 539.02L387.4 538.94L386.8 538.9L386.2 540.06L385.6 541.37L385 542L384.4 539.34L383.8 538.38L383.2 538.38L382.6 538.47L382 538.43L381.4 538.38L380.8 538.46L380.2 538.41L379.6 538.37L379 538.38L378.4 538.44L377.8 538.39L377.2 538.37L376.6 538.4L376 538.42L375.4 538.46L374.8 538.37L374.2 538.37L373.6 538.45L373 538.46L372.4 538.43L371.8 538.41L371.2 538.47L370.6 538.38L370 538.4L369.4 538.38L368.8 538.45L368.2 538.4L367.6 538.45L367 538.38L366.4 538.39L365.8 538.47L365.2 538.46L364.6 538.38L364 538.42L363.4 538.4L362.8 538.41L362.2 538.38L361.6 538.38L361 538.37L360.4 538.46L359.8 538.41L359.2 538.42L358.6 538.38L358 538.4L357.4 538.38L356.8 538.41L356.2 538.38L355.6 538.4L355 538.38L354.4 538.45L353.8 538.44L353.2 538.45L352.6 538.43L352 538.43L351.4 538.37L350.8 538.38L350.2 538.47L349.6 538.38L349 538.45L348.4 538.39L347.8 538.38L347.2 538.39L346.6 538.37L346 538.4L345.4 538.37L344.8 538.44L344.2 538.41L343.6 538.41L343 538.46L342.4 538.39L341.8 538.38L341.2 538.37L340.6 538.4L340 538.38L339.4 538.38L338.8 538.4L338.2 538.38L337.6 538.4L337 538.39L336.4 538.38L335.8 538.4L335.2 538.38L334.6 538.4L334 538.39L333.4 538.46L332.8 538.42L332.2 538.44L331.6 538.47L331 538.42L330.4 538.4L329.8 538.38L329.2 538.38L328.6 538.41L328 538.43Z"/></g><path d="M154.6 136H172.4L163.5 145.2Z" fill="#fff"/><rect x="162.8" y="145" width="1.5" height="9.6" fill="#d0d0d0"/><path d="M400 136H418L409 145.2Z" fill="#fff"/><rect x="407.8" y="145" width="2.2" height="20" fill="#b4b4b4"/><rect x="408.1" y="165" width="1.5" height="407" fill="#fff" opacity=".55"/><path d="M491 397.4V408.6L493.5 406.5L495.5 411.7L498 410.6L495.9 405.7H499.6Z" fill="#000" stroke="#fff" stroke-width="1" stroke-linejoin="round"/></svg><div class="" style="left:0px;top:572px;width:1000px;height:25px;background:#14181e"></div><span class="t" style="left:34.5px;top:578.93px;font:700 13px/1 'Liberation Mono',monospace;color:#dcdcdc;">S-n : Move selected track down</span></div></body></html>
